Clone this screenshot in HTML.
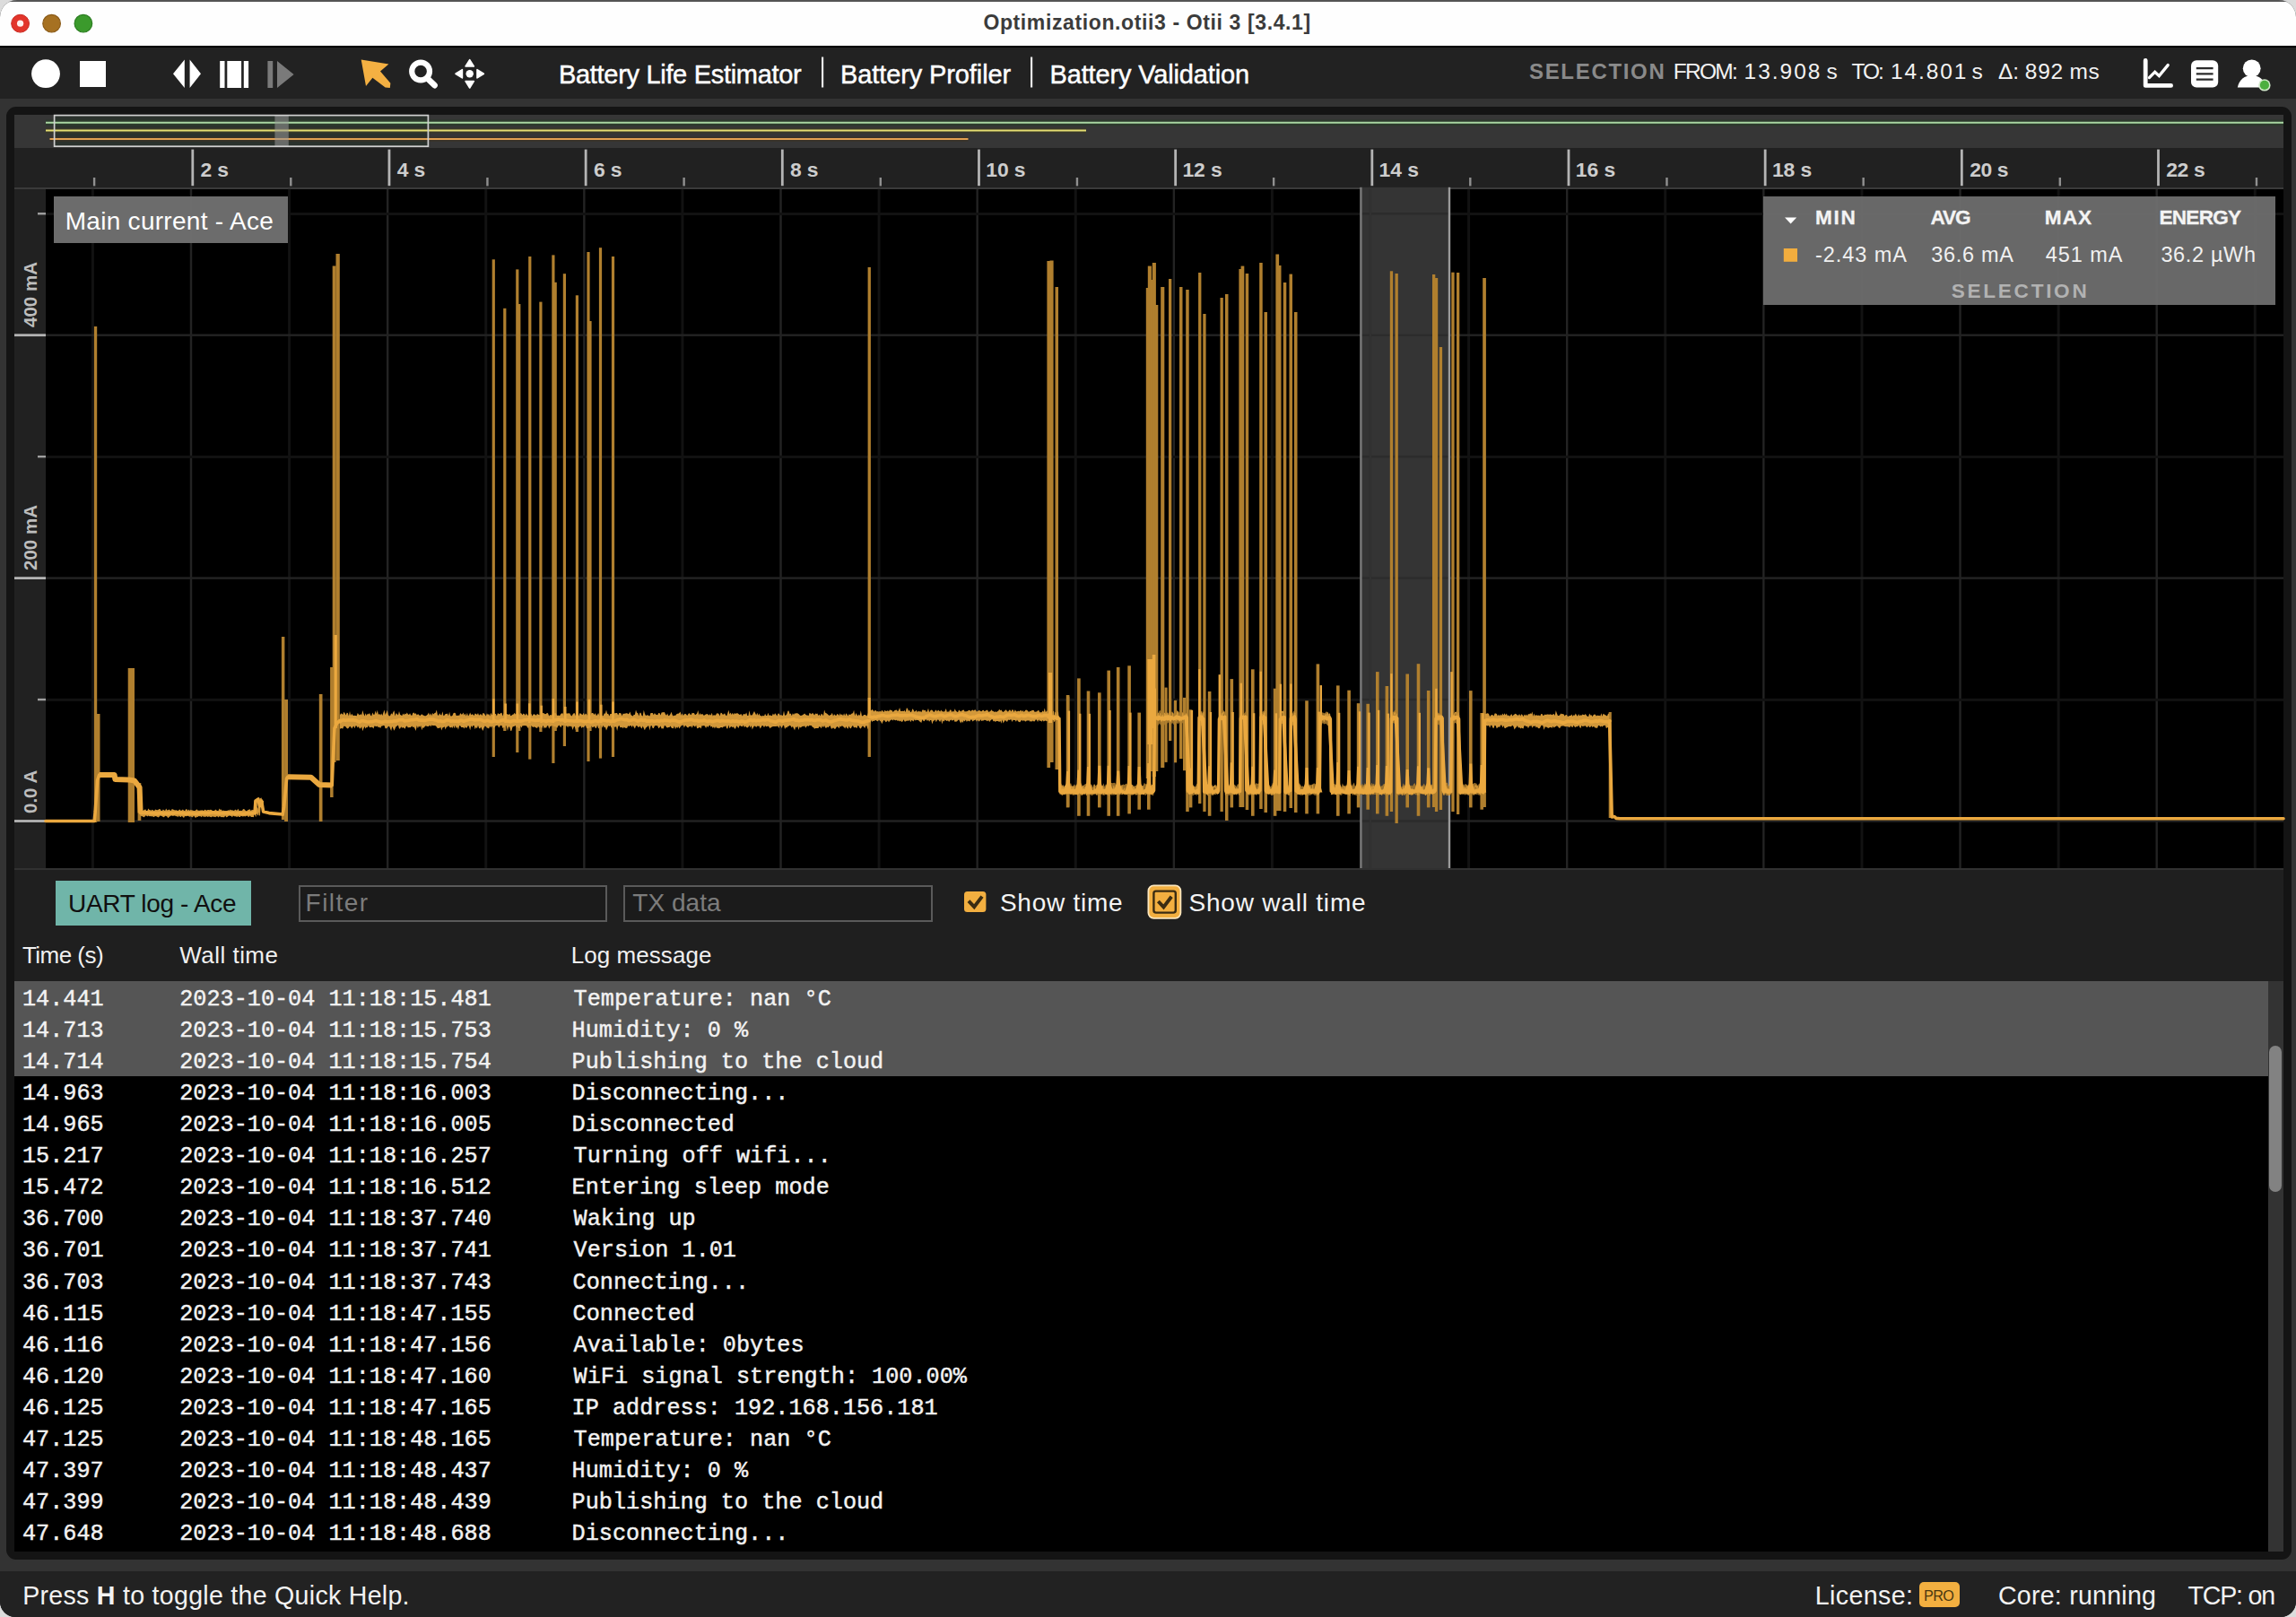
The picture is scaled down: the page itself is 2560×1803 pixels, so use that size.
<!DOCTYPE html>
<html lang="en"><head><meta charset="utf-8"><title>Optimization.otii3 - Otii 3 [3.4.1]</title>
<style>
html,body{margin:0;padding:0;}
body{width:2560px;height:1803px;background:#dcdcdc;position:relative;overflow:hidden;}
#win{position:absolute;left:0;top:0;width:2560px;height:1803px;border-radius:19px 19px 17px 17px;overflow:hidden;background:#222;}
.b{position:absolute;}
.t{position:absolute;white-space:pre;line-height:1;}
.s{font-family:"Liberation Sans",sans-serif;}
.m{font-family:"Liberation Mono",monospace;}
svg{position:absolute;left:0;top:0;overflow:visible;}
</style></head><body><div id="win">

<div class="b" style="left:0.00px;top:0.00px;width:2560.00px;height:52.00px;background:#fefefe;border-top:2px solid #555;box-sizing:border-box;"></div>
<div class="b" style="left:0.00px;top:51.00px;width:2560.00px;height:2.00px;background:#000;"></div>
<svg width="130" height="52" viewBox="0 0 130 52">
<circle cx="22.6" cy="26.2" r="9.9" fill="#e2352b" stroke="#c92a22" stroke-width="1"/><circle cx="22.6" cy="26.2" r="3.6" fill="#fff0ee"/>
<circle cx="57.6" cy="26.2" r="9.8" fill="#a67122" stroke="#8a5a17" stroke-width="1.2"/>
<circle cx="92.9" cy="26.2" r="9.8" fill="#3b9a2c" stroke="#2c7d22" stroke-width="1.2"/>
</svg>
<span class="t s" style="left:1096.40px;top:14.03px;font-size:23px;color:#3b3b3b;font-weight:bold;letter-spacing:0.618px;">Optimization.otii3 - Otii 3 [3.4.1]</span>
<div class="b" style="left:0.00px;top:53.00px;width:2560.00px;height:57.00px;background:#222;"></div>
<svg width="2560" height="130" viewBox="0 0 2560 130">
<circle cx="51" cy="82.2" r="15.9" fill="#fff"/>
<rect x="89" y="68" width="29" height="29" fill="#fff"/>
<path d="M193 82.2 L205.8 66.5 V98 Z M224 82.2 L211.6 66.5 V98 Z" fill="#fff"/>
<path d="M245.2 68h5.3v30h-5.3z M253.3 68h15.8v30h-15.8z M271.8 68h5.3v30h-5.3z" fill="#fff"/>
<path d="M298.4 68h5.8v30h-5.8z M309 68 L327.6 83 L309 98 Z" fill="#7a7a7a"/>
<path d="M402.7 66.5 L433.4 71.6 L424 79.6 L435.4 92.8 L434.8 98 L429.6 97.6 L415.4 86.8 L408 96 Z" fill="#f4b042"/>
<circle cx="469.1" cy="79.5" r="9.9" fill="none" stroke="#fff" stroke-width="6.2"/>
<path d="M476.5 87.3 L484.6 95.2" stroke="#fff" stroke-width="6.6" stroke-linecap="round"/>
<g fill="#fff"><path d="M523.7 66.6 L528.3 74 H519.1 Z M523.7 98 L528.3 90.6 H519.1 Z M508 82.3 L515.4 77.7 V86.9 Z M539.4 82.3 L532 77.7 V86.9 Z" stroke="#fff" stroke-width="1.6" stroke-linejoin="round"/>
<circle cx="523.7" cy="82.3" r="4.2"/></g>
<rect x="916" y="63.5" width="2.2" height="34" fill="#e8e8e8"/>
<rect x="1149" y="63.5" width="2.2" height="34" fill="#e8e8e8"/>
<!-- right icons -->
<path d="M2392.2 67.4 V95.4 H2420.6" fill="none" stroke="#fff" stroke-width="4.8" stroke-linecap="round" stroke-linejoin="round"/>
<path d="M2396.4 86.6 L2402.7 80.2 L2407.4 84.6 L2417.2 72.6" fill="none" stroke="#fff" stroke-width="3.3" stroke-linecap="round" stroke-linejoin="miter"/>
<rect x="2443" y="67.3" width="30.2" height="30.2" rx="6" fill="#fff"/>
<path d="M2448.8 76.1h18.8 M2448.8 82.4h18.8 M2448.8 88.6h18.8" stroke="#2a2a2a" stroke-width="2.3"/>
<circle cx="2510.7" cy="76.3" r="9.9" fill="#fff"/>
<path d="M2494.8 97.6 C2496.6 88.6 2502.6 84.2 2510.7 84.2 C2518.8 84.2 2524.8 88.6 2526.6 97.6 Z" fill="#fff"/>
<circle cx="2524.9" cy="94.9" r="6.7" fill="#cfe8c8"/><circle cx="2524.9" cy="94.9" r="5.1" fill="#4caf3f"/>
</svg>
<span class="t s" style="left:623.00px;top:69.05px;font-size:29px;color:#fff;letter-spacing:-0.312px;-webkit-text-stroke:0.45px #fff;">Battery Life Estimator</span>
<span class="t s" style="left:937.00px;top:69.05px;font-size:29px;color:#fff;letter-spacing:-0.109px;-webkit-text-stroke:0.45px #fff;">Battery Profiler</span>
<span class="t s" style="left:1170.50px;top:69.05px;font-size:29px;color:#fff;letter-spacing:-0.148px;-webkit-text-stroke:0.45px #fff;">Battery Validation</span>
<span class="t s" style="left:1705.00px;top:68.08px;font-size:24px;color:#8a8a8a;font-weight:bold;letter-spacing:1.674px;">SELECTION</span>
<span class="t s" style="left:1865.80px;top:67.76px;font-size:24.5px;color:#f2f2f2;letter-spacing:-1.731px;">FROM:</span>
<span class="t s" style="left:1944.60px;top:67.76px;font-size:24.5px;color:#f2f2f2;letter-spacing:1.978px;">13.908</span>
<span class="t s" style="left:2036.40px;top:67.76px;font-size:24.5px;color:#f2f2f2;">s</span>
<span class="t s" style="left:2064.40px;top:67.76px;font-size:24.5px;color:#f2f2f2;letter-spacing:-1.990px;">TO:</span>
<span class="t s" style="left:2108.00px;top:67.76px;font-size:24.5px;color:#f2f2f2;letter-spacing:1.878px;">14.801</span>
<span class="t s" style="left:2198.50px;top:67.76px;font-size:24.5px;color:#f2f2f2;">s</span>
<span class="t s" style="left:2228.00px;top:67.76px;font-size:24.5px;color:#f2f2f2;">Δ:</span>
<span class="t s" style="left:2257.80px;top:67.76px;font-size:24.5px;color:#f2f2f2;letter-spacing:0.724px;">892</span>
<span class="t s" style="left:2307.50px;top:67.76px;font-size:24.5px;color:#f2f2f2;letter-spacing:0.491px;">ms</span>
<div class="b" style="left:0.00px;top:110.00px;width:2560.00px;height:1642.30px;background:#333;"></div>
<div class="b" style="left:7.00px;top:119.00px;width:2547.50px;height:1620.00px;background:#141414;border-radius:11px;"></div>
<div class="b" style="left:16.00px;top:128.00px;width:2530.00px;height:37.00px;background:#363636;"></div>
<div class="b" style="left:16.00px;top:165.00px;width:2530.00px;height:46.00px;background:#212121;"></div>
<div class="b" style="left:16.00px;top:208.60px;width:2530.00px;height:2.20px;background:#3a3a3a;"></div>
<div class="b" style="left:16.00px;top:210.80px;width:35.00px;height:757.40px;background:#212121;"></div>
<div class="b" style="left:51.00px;top:210.80px;width:2495.00px;height:757.40px;background:#000;"></div>
<svg width="2560" height="1000" viewBox="0 0 2560 1000">
<rect x="60.6" y="128.6" width="416.8" height="34.6" fill="#2b322d"/>
<rect x="51" y="133.6" width="2495" height="6.6" fill="#2b3a2b" opacity="0.9"/>
<rect x="51" y="142.6" width="1160" height="6" fill="#3a3a28" opacity="0.8"/>
<rect x="55.5" y="152.4" width="1024" height="5.4" fill="#3b3226" opacity="0.8"/>
<path d="M51 136.8 H2546" stroke="#a9d7a2" stroke-width="2"/>
<path d="M51 145.6 H1211" stroke="#e6df72" stroke-width="2"/>
<path d="M55.5 155.1 H1079.5" stroke="#e3a052" stroke-width="2"/>
<rect x="306.4" y="129" width="15.4" height="34" fill="#999" opacity="0.55"/>
<rect x="60.6" y="128.6" width="416.8" height="34.6" fill="none" stroke="#d0d0d0" stroke-width="1.7"/>
<rect x="103.91" y="198" width="2.4" height="9.4" fill="#909090"/>
<rect x="213.40" y="166.6" width="2.8" height="40.6" fill="#b4b4b4"/>
<rect x="323.08" y="198" width="2.4" height="9.4" fill="#909090"/>
<rect x="432.57" y="166.6" width="2.8" height="40.6" fill="#b4b4b4"/>
<rect x="542.25" y="198" width="2.4" height="9.4" fill="#909090"/>
<rect x="651.74" y="166.6" width="2.8" height="40.6" fill="#b4b4b4"/>
<rect x="761.42" y="198" width="2.4" height="9.4" fill="#909090"/>
<rect x="870.91" y="166.6" width="2.8" height="40.6" fill="#b4b4b4"/>
<rect x="980.59" y="198" width="2.4" height="9.4" fill="#909090"/>
<rect x="1090.08" y="166.6" width="2.8" height="40.6" fill="#b4b4b4"/>
<rect x="1199.76" y="198" width="2.4" height="9.4" fill="#909090"/>
<rect x="1309.25" y="166.6" width="2.8" height="40.6" fill="#b4b4b4"/>
<rect x="1418.93" y="198" width="2.4" height="9.4" fill="#909090"/>
<rect x="1528.42" y="166.6" width="2.8" height="40.6" fill="#b4b4b4"/>
<rect x="1638.10" y="198" width="2.4" height="9.4" fill="#909090"/>
<rect x="1747.59" y="166.6" width="2.8" height="40.6" fill="#b4b4b4"/>
<rect x="1857.27" y="198" width="2.4" height="9.4" fill="#909090"/>
<rect x="1966.76" y="166.6" width="2.8" height="40.6" fill="#b4b4b4"/>
<rect x="2076.45" y="198" width="2.4" height="9.4" fill="#909090"/>
<rect x="2185.93" y="166.6" width="2.8" height="40.6" fill="#b4b4b4"/>
<rect x="2295.62" y="198" width="2.4" height="9.4" fill="#909090"/>
<rect x="2405.10" y="166.6" width="2.8" height="40.6" fill="#b4b4b4"/>
<rect x="2514.79" y="198" width="2.4" height="9.4" fill="#909090"/>
<rect x="101.91" y="210.8" width="3" height="757.4" fill="#121212"/>
<rect x="211.80" y="210.8" width="2.4" height="757.4" fill="#232323"/>
<rect x="321.08" y="210.8" width="3" height="757.4" fill="#121212"/>
<rect x="430.97" y="210.8" width="2.4" height="757.4" fill="#232323"/>
<rect x="540.25" y="210.8" width="3" height="757.4" fill="#121212"/>
<rect x="650.14" y="210.8" width="2.4" height="757.4" fill="#232323"/>
<rect x="759.42" y="210.8" width="3" height="757.4" fill="#121212"/>
<rect x="869.31" y="210.8" width="2.4" height="757.4" fill="#232323"/>
<rect x="978.59" y="210.8" width="3" height="757.4" fill="#121212"/>
<rect x="1088.48" y="210.8" width="2.4" height="757.4" fill="#232323"/>
<rect x="1197.76" y="210.8" width="3" height="757.4" fill="#121212"/>
<rect x="1307.65" y="210.8" width="2.4" height="757.4" fill="#232323"/>
<rect x="1416.93" y="210.8" width="3" height="757.4" fill="#121212"/>
<rect x="1526.82" y="210.8" width="2.4" height="757.4" fill="#232323"/>
<rect x="1636.10" y="210.8" width="3" height="757.4" fill="#121212"/>
<rect x="1745.99" y="210.8" width="2.4" height="757.4" fill="#232323"/>
<rect x="1855.27" y="210.8" width="3" height="757.4" fill="#121212"/>
<rect x="1965.16" y="210.8" width="2.4" height="757.4" fill="#232323"/>
<rect x="2074.45" y="210.8" width="3" height="757.4" fill="#121212"/>
<rect x="2184.33" y="210.8" width="2.4" height="757.4" fill="#232323"/>
<rect x="2293.62" y="210.8" width="3" height="757.4" fill="#121212"/>
<rect x="2403.50" y="210.8" width="2.4" height="757.4" fill="#232323"/>
<rect x="2512.79" y="210.8" width="3" height="757.4" fill="#121212"/>
<rect x="51" y="914.30" width="2495" height="2.4" fill="#232323"/>
<rect x="16" y="914.10" width="35" height="2.8" fill="#b4b4b4"/>
<rect x="51" y="778.85" width="2495" height="3" fill="#121212"/>
<rect x="42" y="778.85" width="9" height="2.4" fill="#a0a0a0"/>
<rect x="51" y="643.40" width="2495" height="2.4" fill="#232323"/>
<rect x="16" y="643.20" width="35" height="2.8" fill="#b4b4b4"/>
<rect x="51" y="507.95" width="2495" height="3" fill="#121212"/>
<rect x="42" y="507.95" width="9" height="2.4" fill="#a0a0a0"/>
<rect x="51" y="372.50" width="2495" height="2.4" fill="#232323"/>
<rect x="16" y="372.30" width="35" height="2.8" fill="#b4b4b4"/>
<rect x="51" y="237.05" width="2495" height="3" fill="#121212"/>
<rect x="42" y="237.05" width="9" height="2.4" fill="#a0a0a0"/>
<rect x="1517.4" y="208.8" width="98.8" height="759.4" fill="#343434"/>
<rect x="1518" y="914.30" width="97" height="2.4" fill="#2c2c2c"/>
<rect x="1518" y="778.85" width="97" height="2.4" fill="#2c2c2c"/>
<rect x="1518" y="643.40" width="97" height="2.4" fill="#2c2c2c"/>
<rect x="1518" y="507.95" width="97" height="2.4" fill="#2c2c2c"/>
<rect x="1518" y="372.50" width="97" height="2.4" fill="#2c2c2c"/>
<rect x="1518" y="237.05" width="97" height="2.4" fill="#2c2c2c"/>
<rect x="1526.82" y="210.8" width="2.4" height="757.4" fill="#313131"/>
<rect x="1516.2" y="208.8" width="2.4" height="759.4" fill="#7a7a7a"/>
<rect x="1614.8" y="208.8" width="2.4" height="759.4" fill="#9a9a9a"/>
<g fill="#b07f2e">
<rect x="104.9" y="364" width="3.3" height="553"/>
<rect x="107.2" y="796" width="4.3" height="120"/>
<rect x="142.7" y="745" width="7.3" height="172"/>
<rect x="153.6" y="873" width="3.7" height="42"/>
<rect x="313.9" y="710" width="3.5" height="204"/>
<rect x="317.1" y="780" width="3.9" height="136"/>
<rect x="355.8" y="774" width="3.7" height="142"/>
<rect x="368.1" y="744" width="3.5" height="145"/>
<rect x="370.7" y="296.5" width="3.9" height="553.5"/>
<rect x="374.5" y="283" width="4.3" height="565"/>
<rect x="548.7" y="289.3" width="3.2" height="554.7"/>
<rect x="561.2" y="343.8" width="3.2" height="471.2"/>
<rect x="575.2" y="300.4" width="3.2" height="538.6"/>
<rect x="577.2" y="339" width="3.2" height="476"/>
<rect x="589.2" y="286" width="3.2" height="560.6"/>
<rect x="601.3" y="336.6" width="3.2" height="479.4"/>
<rect x="615.3" y="284.4" width="3.2" height="566.6"/>
<rect x="617.6" y="314.8" width="3.2" height="500.2"/>
<rect x="627.8" y="305.2" width="3.2" height="526.8"/>
<rect x="641.8" y="329.3" width="3.2" height="486.7"/>
<rect x="654.4" y="281" width="3.2" height="568"/>
<rect x="656.4" y="358" width="3.2" height="457"/>
<rect x="667.9" y="276.2" width="3.2" height="569.4"/>
<rect x="681.9" y="286" width="3.2" height="558"/>
<rect x="967.6" y="298" width="3.3" height="546"/>
<rect x="1167.4" y="291" width="3.7" height="565"/>
<rect x="1170.5" y="290.5" width="4.1" height="559.5"/>
<rect x="1176.5" y="320" width="3.5" height="538"/>
<rect x="1189.1" y="776.6" width="3.3" height="123"/>
<rect x="1188.8" y="775" width="3.6" height="125.4"/>
<rect x="1201.1" y="756.4" width="3.6" height="153.4"/>
<rect x="1211.7" y="770.5" width="3.6" height="139.3"/>
<rect x="1224" y="772.3" width="3.6" height="128.1"/>
<rect x="1234.4" y="747.6" width="3.6" height="162.2"/>
<rect x="1244.9" y="744" width="3.6" height="165.8"/>
<rect x="1257.3" y="742.3" width="3.6" height="165.1"/>
<rect x="1268.4" y="794.6" width="3.6" height="108.1"/>
<rect x="1279" y="754.2" width="3.6" height="148.5"/>
<rect x="1325.8" y="791.3" width="3.6" height="109.1"/>
<rect x="1346.8" y="771" width="3.6" height="138.8"/>
<rect x="1371.5" y="757.1" width="3.6" height="143.3"/>
<rect x="1395" y="746.3" width="3.6" height="163.5"/>
<rect x="1419.8" y="767.7" width="3.6" height="142.1"/>
<rect x="1455.2" y="781.3" width="3.6" height="126.1"/>
<rect x="1467.6" y="740.4" width="3.6" height="167"/>
<rect x="1490" y="764.4" width="3.6" height="145.4"/>
<rect x="1502.3" y="769.7" width="3.6" height="137.7"/>
<rect x="1512.8" y="784.2" width="3.6" height="116.2"/>
<rect x="1523.4" y="784.8" width="3.6" height="117.9"/>
<rect x="1534" y="749.1" width="3.6" height="158.3"/>
<rect x="1544.6" y="765" width="3.6" height="144.8"/>
<rect x="1567.4" y="751.5" width="3.6" height="148.9"/>
<rect x="1579.7" y="740.2" width="3.6" height="169.6"/>
<rect x="1590.9" y="770" width="3.6" height="130.4"/>
<rect x="1638" y="770.1" width="3.6" height="130.3"/>
<rect x="1650.4" y="795" width="3.6" height="107.7"/>
<rect x="1277.8" y="321" width="3.7" height="547"/>
<rect x="1279.8" y="296.6" width="4.1" height="563.4"/>
<rect x="1282.4" y="312" width="4.1" height="548"/>
<rect x="1284.8" y="293" width="4.1" height="573"/>
<rect x="1287.6" y="340" width="3.7" height="520"/>
<rect x="1294.2" y="320" width="4.1" height="536"/>
<rect x="1303" y="311" width="3.3" height="515"/>
<rect x="1315" y="320" width="3.5" height="526"/>
<rect x="1322.2" y="323" width="3.5" height="582"/>
<rect x="1336.1" y="304" width="3.3" height="592"/>
<rect x="1341.3" y="350" width="3.3" height="555"/>
<rect x="1360.5" y="332" width="3.3" height="573"/>
<rect x="1366" y="328" width="3.5" height="587"/>
<rect x="1381.4" y="300" width="3.7" height="600"/>
<rect x="1383.6" y="296.6" width="3.7" height="603.4"/>
<rect x="1388.7" y="305" width="3.5" height="598"/>
<rect x="1404.2" y="293" width="3.5" height="609"/>
<rect x="1409.5" y="348" width="3.5" height="558"/>
<rect x="1422.4" y="283.5" width="3.7" height="620.5"/>
<rect x="1424.8" y="296" width="3.7" height="608"/>
<rect x="1430.8" y="315" width="3.5" height="590"/>
<rect x="1437.5" y="305.6" width="3.5" height="595.4"/>
<rect x="1443" y="348" width="3.5" height="558"/>
<rect x="1549.8" y="302.3" width="3.3" height="602.7"/>
<rect x="1555.5" y="305" width="3.3" height="613"/>
<rect x="1597" y="306" width="3.3" height="594"/>
<rect x="1599.9" y="310" width="3.3" height="595"/>
<rect x="1604.8" y="387" width="3.3" height="516"/>
<rect x="1618.3" y="303.7" width="3.3" height="601.3"/>
<rect x="1624" y="304" width="3.3" height="604"/>
<rect x="1653.2" y="310" width="3.7" height="590"/>
<rect x="1298.5" y="766.6" width="3.1" height="83.3"/>
<rect x="1309" y="780.9" width="3.1" height="69.4"/>
<rect x="1319" y="777.9" width="3.1" height="81.3"/>
<rect x="1793.7" y="794" width="3.1" height="118"/>
</g>
<path d="M1181 875.7 L1182.3 877.9 L1183.6 873.4 L1184.9 877.2 L1186.2 877.8 L1187.5 876.3 L1188.8 874 L1190.1 875.3 L1191.4 874.4 L1192.7 874.5 L1194 873.1 L1195.3 876.9 L1196.6 877 L1197.9 874.3 L1199.2 876.3 L1200.5 874.4 L1201.8 875.9 L1203.1 875.7 L1204.4 877.7 L1205.7 872.7 L1207 877.6 L1208.3 875.4 L1209.6 874.4 L1210.9 873.7 L1212.2 873 L1213.5 875.5 L1214.8 875.4 L1216.1 874.3 L1217.4 874.9 L1218.7 877.9 L1220 873.7 L1221.3 876.3 L1222.6 874.9 L1223.9 876.2 L1225.2 876.1 L1226.5 876.6 L1227.8 875.7 L1229.1 877.6 L1230.4 873.3 L1231.7 877.2 L1233 874.2 L1234.3 876 L1235.6 878.1 L1236.9 876.2 L1238.2 872.6 L1239.5 873.1 L1240.8 873.3 L1242.1 872.8 L1243.4 872.9 L1244.7 877 L1246 875.4 L1247.3 876 L1248.6 874.9 L1249.9 876.6 L1251.2 875.3 L1252.5 874.4 L1253.8 875.2 L1255.1 873.9 L1256.4 873.8 L1257.7 876.7 L1259 875.3 L1260.3 876.5 L1261.6 874.2 L1262.9 875.4 L1264.2 876.9 L1265.5 876.1 L1266.8 876.1 L1268.1 874.1 L1269.4 876.8 L1270.7 874.5 L1272 874.6 L1273.3 876.6 L1274.6 876.1 L1275.9 872.8 L1277.2 874.4 L1278.5 873.7 L1279.8 876.2 L1281.1 873.7 L1282.4 875.4 L1283.7 876.6 L1285 874.2 L1286.3 873.4 L1287.6 794 L1288.9 794.6 L1290.2 795.2 L1291.5 794.7 L1292.8 792.2 L1294.1 792.2 L1295.4 794.1 L1296.7 792.5 L1298 795.5 L1299.3 794 L1300.6 793.3 L1301.9 795.9 L1303.2 794.3 L1304.5 794.3 L1305.8 794.5 L1307.1 793.2 L1308.4 795.9 L1309.7 793.3 L1311 795.1 L1312.3 791.9 L1313.6 793.4 L1314.9 794.6 L1316.2 794.5 L1317.5 793.3 L1318.8 795.4 L1320.1 794.6 L1321.4 794.4 L1322.7 795.5 L1324 794.9 L1325.3 876.8 L1326.6 876 L1327.9 873.7 L1329.2 876.6 L1330.5 875.5 L1331.8 877.8 L1333.1 876.8 L1334.4 873.8 L1335.7 875.1 L1337 792.4 L1338.3 794.8 L1339.6 794 L1340.9 795.6 L1342.2 876.9 L1343.5 877.6 L1344.8 876.1 L1346.1 875.3 L1347.4 874.2 L1348.7 872.7 L1350 875.3 L1351.3 876.1 L1352.6 876.9 L1353.9 876.1 L1355.2 874.7 L1356.5 876.5 L1357.8 872.8 L1359.1 795.5 L1360.4 793.6 L1361.7 794.5 L1363 794.5 L1364.3 791.7 L1365.6 794.2 L1366.9 874.5 L1368.2 875.6 L1369.5 876.8 L1370.8 875.6 L1372.1 876 L1373.4 877.9 L1374.7 872.8 L1376 874.4 L1377.3 875.5 L1378.6 877.1 L1379.9 874.3 L1381.2 874.6 L1382.5 874.7 L1383.8 793.7 L1385.1 793.5 L1386.4 793.8 L1387.7 795.4 L1389 792.9 L1390.3 874.7 L1391.6 875 L1392.9 875.7 L1394.2 875 L1395.5 876.1 L1396.8 872.8 L1398.1 874.5 L1399.4 874.7 L1400.7 873 L1402 874.1 L1403.3 873.4 L1404.6 873.5 L1405.9 795.9 L1407.2 794 L1408.5 792.9 L1409.8 792.1 L1411.1 873.2 L1412.4 878 L1413.7 877.7 L1415 874.7 L1416.3 877.2 L1417.6 876.6 L1418.9 873.1 L1420.2 872.7 L1421.5 873.7 L1422.8 873 L1424.1 874.1 L1425.4 877.6 L1426.7 875.1 L1428 792.1 L1429.3 792.9 L1430.6 792.5 L1431.9 795.1 L1433.2 876.6 L1434.5 873.5 L1435.8 874.3 L1437.1 876.9 L1438.4 872.9 L1439.7 793.7 L1441 795.9 L1442.3 792.6 L1443.6 794.4 L1444.9 876.2 L1446.2 874.5 L1447.5 875.2 L1448.8 873 L1450.1 875.3 L1451.4 877 L1452.7 876.2 L1454 877.6 L1455.3 874.6 L1456.6 876 L1457.9 876.9 L1459.2 878.1 L1460.5 876.7 L1461.8 875.1 L1463.1 874.7 L1464.4 873.8 L1465.7 873.4 L1467 874.4 L1468.3 875.7 L1469.6 872.9 L1470.9 877.5 L1472.2 793.7 L1473.5 795 L1474.8 794.3 L1476.1 795.2 L1477.4 795.1 L1478.7 793.6 L1480 793.7 L1481.3 795.9 L1482.6 795.1 L1483.9 873.9 L1485.2 875.1 L1486.5 873.8 L1487.8 874.1 L1489.1 874.9 L1490.4 876.1 L1491.7 877.7 L1493 874.3 L1494.3 875.1 L1495.6 877.5 L1496.9 873.3 L1498.2 876.7 L1499.5 876.7 L1500.8 875.4 L1502.1 876.4 L1503.4 876.1 L1504.7 874.1 L1506 876.9 L1507.3 876.3 L1508.6 874.3 L1509.9 872.6 L1511.2 877.9 L1512.5 875.8 L1513.8 875.9 L1515.1 877.7 L1516.4 875.3 L1517.7 875.7 L1519 873.5 L1520.3 877.1 L1521.6 873.2 L1522.9 874.5 L1524.2 875.6 L1525.5 876.8 L1526.8 873.3 L1528.1 876.1 L1529.4 872.7 L1530.7 874.7 L1532 873.5 L1533.3 877.4 L1534.6 874.2 L1535.9 877 L1537.2 874.5 L1538.5 878 L1539.8 876.3 L1541.1 876.2 L1542.4 874.4 L1543.7 873.8 L1545 875.1 L1546.3 877.5 L1547.6 877.7 L1548.9 878 L1550.2 876.1 L1551.5 794.2 L1552.8 794.1 L1554.1 793.6 L1555.4 791.6 L1556.7 794 L1558 872.8 L1559.3 874.5 L1560.6 875.9 L1561.9 876.6 L1563.2 877.9 L1564.5 873.3 L1565.8 875.7 L1567.1 876.6 L1568.4 875.2 L1569.7 872.9 L1571 876.8 L1572.3 875.8 L1573.6 875.7 L1574.9 876.4 L1576.2 874.2 L1577.5 873 L1578.8 876.4 L1580.1 878 L1581.4 877.4 L1582.7 878 L1584 876.9 L1585.3 877.6 L1586.6 875.3 L1587.9 873.6 L1589.2 876.7 L1590.5 873.5 L1591.8 874 L1593.1 872.9 L1594.4 874.8 L1595.7 877.5 L1597 874.3 L1598.3 874.1 L1599.6 875.4 L1600.9 794 L1602.2 793.4 L1603.5 794.8 L1604.8 795.6 L1606.1 793.8 L1607.4 795.5 L1608.7 875.3 L1610 876 L1611.3 873.2 L1612.6 872.7 L1613.9 872.7 L1615.2 876.7 L1616.5 874.7 L1617.8 872.6 L1619.1 792.4 L1620.4 795.6 L1621.7 795.2 L1623 793.2 L1624.3 793.9 L1625.6 795.6 L1626.9 795.5 L1628.2 874.5 L1629.5 877.9 L1630.8 872.8 L1632.1 875.8 L1633.4 874.3 L1634.7 874.5 L1636 875 L1637.3 877.1 L1638.6 872.8 L1639.9 872.6 L1641.2 873.5 L1642.5 874 L1643.8 872.9 L1645.1 873.3 L1646.4 873.8 L1647.7 876.4 L1649 873.7 L1650.3 873.5 L1651.6 877.2 L1652.9 875 L1654.2 876.2 L1654.2 885.3 L1652.9 885.5 L1651.6 885.4 L1650.3 886.4 L1649 886.8 L1647.7 885.8 L1646.4 886.1 L1645.1 885.6 L1643.8 886.8 L1642.5 886.5 L1641.2 885.6 L1639.9 886 L1638.6 886.7 L1637.3 887 L1636 886.1 L1634.7 885.9 L1633.4 886.6 L1632.1 885.8 L1630.8 885.9 L1629.5 885.5 L1628.2 886.5 L1626.9 807.1 L1625.6 808 L1624.3 808.2 L1623 805.9 L1621.7 806.2 L1620.4 808.9 L1619.1 807.5 L1617.8 886.4 L1616.5 885.5 L1615.2 886.7 L1613.9 887 L1612.6 886.9 L1611.3 885.6 L1610 885.9 L1608.7 886.5 L1607.4 807.3 L1606.1 806 L1604.8 808.6 L1603.5 807.9 L1602.2 806.3 L1600.9 806.3 L1599.6 885.5 L1598.3 885.7 L1597 886.3 L1595.7 885.2 L1594.4 886.8 L1593.1 885.9 L1591.8 885.3 L1590.5 885.2 L1589.2 885.6 L1587.9 885.9 L1586.6 885.4 L1585.3 885.5 L1584 885.3 L1582.7 885.4 L1581.4 886 L1580.1 885.9 L1578.8 886.5 L1577.5 885.3 L1576.2 885.2 L1574.9 886.3 L1573.6 886.9 L1572.3 885.2 L1571 886.2 L1569.7 886.9 L1568.4 886 L1567.1 885.4 L1565.8 886.6 L1564.5 885.5 L1563.2 886 L1561.9 885.3 L1560.6 886.6 L1559.3 886.8 L1558 885.7 L1556.7 806 L1555.4 806.7 L1554.1 806.4 L1552.8 805.6 L1551.5 807.3 L1550.2 885.5 L1548.9 886.5 L1547.6 887 L1546.3 886.6 L1545 886.7 L1543.7 885.7 L1542.4 885.7 L1541.1 885.4 L1539.8 886.3 L1538.5 886 L1537.2 886.4 L1535.9 886.4 L1534.6 886.6 L1533.3 885.7 L1532 886 L1530.7 886.4 L1529.4 885.1 L1528.1 886.9 L1526.8 885.3 L1525.5 886.2 L1524.2 886.2 L1522.9 886.2 L1521.6 885.9 L1520.3 885.9 L1519 886.1 L1517.7 886.6 L1516.4 886 L1515.1 887 L1513.8 885.7 L1512.5 887 L1511.2 886.6 L1509.9 885.5 L1508.6 886.7 L1507.3 885.3 L1506 885.1 L1504.7 885.3 L1503.4 886.7 L1502.1 886 L1500.8 885.6 L1499.5 885.3 L1498.2 885.3 L1496.9 885.2 L1495.6 886.8 L1494.3 886.6 L1493 885.4 L1491.7 886.4 L1490.4 886.1 L1489.1 886.4 L1487.8 885.6 L1486.5 885.7 L1485.2 885.5 L1483.9 886.2 L1482.6 805.2 L1481.3 809.2 L1480 808.8 L1478.7 807 L1477.4 807.1 L1476.1 807.6 L1474.8 805.7 L1473.5 808.9 L1472.2 805.7 L1470.9 885.9 L1469.6 885.5 L1468.3 886.4 L1467 886.7 L1465.7 886.7 L1464.4 885.7 L1463.1 885.4 L1461.8 886.3 L1460.5 886.8 L1459.2 886.7 L1457.9 886 L1456.6 886.3 L1455.3 886.1 L1454 885.7 L1452.7 886.7 L1451.4 886.5 L1450.1 886.7 L1448.8 886 L1447.5 885.4 L1446.2 885.9 L1444.9 886.6 L1443.6 805.9 L1442.3 808.9 L1441 808.4 L1439.7 807.3 L1438.4 885.8 L1437.1 885.5 L1435.8 885.9 L1434.5 885.6 L1433.2 886.6 L1431.9 809.3 L1430.6 807.1 L1429.3 807.1 L1428 805.6 L1426.7 886.3 L1425.4 887 L1424.1 885.6 L1422.8 886.7 L1421.5 885.7 L1420.2 886 L1418.9 886.8 L1417.6 886.9 L1416.3 885.7 L1415 885.3 L1413.7 885.2 L1412.4 885.8 L1411.1 885.8 L1409.8 805.9 L1408.5 807.4 L1407.2 808.7 L1405.9 809 L1404.6 886.1 L1403.3 885.5 L1402 885.6 L1400.7 887 L1399.4 885.2 L1398.1 885.3 L1396.8 886.7 L1395.5 886 L1394.2 886.6 L1392.9 886.8 L1391.6 885.5 L1390.3 886.7 L1389 807.5 L1387.7 806.4 L1386.4 807.8 L1385.1 805.6 L1383.8 806.4 L1382.5 885.4 L1381.2 885.4 L1379.9 885.6 L1378.6 886.4 L1377.3 885.5 L1376 886.1 L1374.7 886.5 L1373.4 885.5 L1372.1 886.6 L1370.8 886.8 L1369.5 886.7 L1368.2 885.9 L1366.9 886.4 L1365.6 805.7 L1364.3 806.6 L1363 806.9 L1361.7 808.8 L1360.4 806.5 L1359.1 808 L1357.8 885.8 L1356.5 885.3 L1355.2 886.2 L1353.9 885.8 L1352.6 886.9 L1351.3 886.8 L1350 886.1 L1348.7 885.4 L1347.4 886.1 L1346.1 885.7 L1344.8 886 L1343.5 885.3 L1342.2 885.1 L1340.9 807.1 L1339.6 809.5 L1338.3 808.4 L1337 805.5 L1335.7 885.9 L1334.4 886.8 L1333.1 886.3 L1331.8 885.9 L1330.5 887.1 L1329.2 886.7 L1327.9 886.7 L1326.6 885.2 L1325.3 886.3 L1324 808.9 L1322.7 809.4 L1321.4 809.1 L1320.1 806.9 L1318.8 806 L1317.5 807.3 L1316.2 807.9 L1314.9 805.2 L1313.6 807.6 L1312.3 806.1 L1311 808.8 L1309.7 806.3 L1308.4 808 L1307.1 805.8 L1305.8 808.1 L1304.5 808.4 L1303.2 805 L1301.9 806.8 L1300.6 806.1 L1299.3 806.8 L1298 809.1 L1296.7 806.7 L1295.4 805.9 L1294.1 809 L1292.8 806.5 L1291.5 809.1 L1290.2 805.7 L1288.9 809.4 L1287.6 806.9 L1286.3 886.8 L1285 886.9 L1283.7 886.1 L1282.4 885.8 L1281.1 886.6 L1279.8 885.3 L1278.5 885.6 L1277.2 887 L1275.9 886.1 L1274.6 885.2 L1273.3 885.2 L1272 886.5 L1270.7 886.5 L1269.4 886.7 L1268.1 885.5 L1266.8 886.6 L1265.5 885.7 L1264.2 886 L1262.9 886.6 L1261.6 886.7 L1260.3 885.9 L1259 885.9 L1257.7 887 L1256.4 886.1 L1255.1 886.5 L1253.8 885.7 L1252.5 885.5 L1251.2 885.9 L1249.9 886.1 L1248.6 885.5 L1247.3 886.1 L1246 885.8 L1244.7 886.1 L1243.4 886.2 L1242.1 886.4 L1240.8 886.3 L1239.5 886.7 L1238.2 885.7 L1236.9 886.8 L1235.6 885.2 L1234.3 886.4 L1233 885.3 L1231.7 886.8 L1230.4 886.4 L1229.1 886.6 L1227.8 885.1 L1226.5 887.1 L1225.2 886.5 L1223.9 886.5 L1222.6 886.5 L1221.3 885.2 L1220 885.3 L1218.7 886.5 L1217.4 887.1 L1216.1 886.5 L1214.8 885.4 L1213.5 885.4 L1212.2 886.7 L1210.9 885.7 L1209.6 886.1 L1208.3 885.5 L1207 886.1 L1205.7 886.9 L1204.4 886.2 L1203.1 885.4 L1201.8 886.5 L1200.5 885.5 L1199.2 885.6 L1197.9 887.1 L1196.6 885.3 L1195.3 885.9 L1194 885.1 L1192.7 885.3 L1191.4 886 L1190.1 885.4 L1188.8 886.5 L1187.5 885.3 L1186.2 886.1 L1184.9 886.4 L1183.6 886.4 L1182.3 885.3 L1181 885.4Z" fill="#b07f2e" opacity="0.85"/>
<g fill="#d2983a">
<path d="M156.6 903.6 L157.7 901.6 L158.8 904.2 L159.9 903.4 L161 903 L162.1 902.2 L163.2 904 L164.3 903.9 L165.4 901.5 L166.5 902.9 L167.6 903.3 L168.7 903.8 L169.8 902.8 L170.9 903.4 L172 904.2 L173.1 902.5 L174.2 903.1 L175.3 903.3 L176.4 902.9 L177.5 901.9 L178.6 902.3 L179.7 904 L180.8 904.1 L181.9 902.6 L183 903.5 L184.1 903.9 L185.2 901.4 L186.3 903.5 L187.4 903.2 L188.5 902.4 L189.6 903.5 L190.7 904.1 L191.8 902 L192.9 902.4 L194 903 L195.1 903.5 L196.2 903.3 L197.3 903.6 L198.4 904.2 L199.5 903.1 L200.6 902.5 L201.7 903.9 L202.8 903.6 L203.9 902.5 L205 903.8 L206.1 904.2 L207.2 902.3 L208.3 902.3 L209.4 903.9 L210.5 902.5 L211.6 904.1 L212.7 902.7 L213.8 903.6 L214.9 903.4 L216 904 L217.1 904 L218.2 903.5 L219.3 902.3 L220.4 903.4 L221.5 903.7 L222.6 903.7 L223.7 903.5 L224.8 903.4 L225.9 903.2 L227 904.3 L228.1 902.8 L229.2 903.1 L230.3 903.8 L231.4 903.1 L232.5 903 L233.6 903.3 L234.7 902.8 L235.8 903.1 L236.9 904 L238 904.1 L239.1 904 L240.2 902.4 L241.3 903.4 L242.4 903.9 L243.5 903.9 L244.6 901.5 L245.7 903 L246.8 902.6 L247.9 904.2 L249 903.4 L250.1 904 L251.2 904.1 L252.3 904.1 L253.4 904.1 L254.5 903.3 L255.6 903.7 L256.7 902.4 L257.8 903.6 L258.9 903.2 L260 903.8 L261.1 903.9 L262.2 902.6 L263.3 903.5 L264.4 903.6 L265.5 901.8 L266.6 904.1 L267.7 904.1 L268.8 903.7 L269.9 903.9 L271 902.3 L272.1 902 L273.2 903.3 L274.3 904.3 L275.4 904.2 L276.5 903.1 L277.6 902.8 L278.7 902.2 L279.8 904.2 L280.9 902.8 L282 903.2 L283.1 903.1 L283.1 911.2 L282 911.1 L280.9 911 L279.8 911.1 L278.7 909.6 L277.6 911.1 L276.5 910.4 L275.4 909.4 L274.3 909.9 L273.2 910.4 L272.1 910.1 L271 910.5 L269.9 910.3 L268.8 909.8 L267.7 911.1 L266.6 910.9 L265.5 910 L264.4 911.1 L263.3 910.4 L262.2 910.2 L261.1 910.3 L260 909.4 L258.9 911.3 L257.8 910 L256.7 909.7 L255.6 909.6 L254.5 910 L253.4 911.1 L252.3 911.3 L251.2 909.4 L250.1 911.2 L249 911.2 L247.9 910.9 L246.8 911.3 L245.7 910.4 L244.6 910.2 L243.5 911.6 L242.4 910.2 L241.3 910.3 L240.2 911.3 L239.1 910.8 L238 910.7 L236.9 910.2 L235.8 911.3 L234.7 911.1 L233.6 910.4 L232.5 910.4 L231.4 910.9 L230.3 909.9 L229.2 911 L228.1 910.5 L227 911 L225.9 909.4 L224.8 911.2 L223.7 910.3 L222.6 910.2 L221.5 909.9 L220.4 911.1 L219.3 910.7 L218.2 912.1 L217.1 911 L216 909.6 L214.9 911.3 L213.8 911 L212.7 910.3 L211.6 910.7 L210.5 910.3 L209.4 909.8 L208.3 910.1 L207.2 910.3 L206.1 909.9 L205 912 L203.9 911 L202.8 909.8 L201.7 910.9 L200.6 910.8 L199.5 909.4 L198.4 911.3 L197.3 909.9 L196.2 910.3 L195.1 909.6 L194 909.6 L192.9 910.1 L191.8 909.4 L190.7 909.5 L189.6 910.2 L188.5 910.9 L187.4 912.2 L186.3 910.5 L185.2 909.9 L184.1 909.8 L183 911.2 L181.9 911.1 L180.8 910.3 L179.7 909.8 L178.6 909.6 L177.5 910.7 L176.4 911.4 L175.3 910.7 L174.2 910.3 L173.1 910 L172 910.7 L170.9 910.9 L169.8 909.9 L168.7 910.5 L167.6 910 L166.5 910.2 L165.4 909.5 L164.3 910.5 L163.2 909.6 L162.1 909.4 L161 911.3 L159.9 911 L158.8 910.2 L157.7 910.1 L156.6 909.6Z"/>
<path d="M379 797.3 L380.1 795.6 L381.2 795.8 L382.3 797.1 L383.4 793.8 L384.5 795.3 L385.6 797.6 L386.7 794.8 L387.8 795 L388.9 798.4 L390 792.9 L391.1 798.1 L392.2 795.7 L393.3 797.4 L394.4 798 L395.5 797.8 L396.6 798.1 L397.7 798.3 L398.8 795.1 L399.9 796.5 L401 797.5 L402.1 796.1 L403.2 797.6 L404.3 792.1 L405.4 795.8 L406.5 798.6 L407.6 795.2 L408.7 798 L409.8 795.7 L410.9 796.4 L412 794.9 L413.1 797.6 L414.2 798.4 L415.3 794.6 L416.4 796.8 L417.5 796.7 L418.6 792.6 L419.7 795.9 L420.8 791.8 L421.9 796.9 L423 795.7 L424.1 797.4 L425.2 795.6 L426.3 797.9 L427.4 794.8 L428.5 791.6 L429.6 797.1 L430.7 794.6 L431.8 791.7 L432.9 797.1 L434 798.6 L435.1 798.1 L436.2 795.3 L437.3 796.7 L438.4 794 L439.5 792.2 L440.6 798.4 L441.7 795 L442.8 796.2 L443.9 797.5 L445 792.9 L446.1 796.7 L447.2 797.6 L448.3 797.9 L449.4 795.5 L450.5 797.2 L451.6 795.6 L452.7 796.4 L453.8 794.6 L454.9 796.6 L456 797 L457.1 795.2 L458.2 797.5 L459.3 797.8 L460.4 795.1 L461.5 794.6 L462.6 796 L463.7 795.3 L464.8 797.5 L465.9 796.3 L467 796.8 L468.1 798.2 L469.2 797.2 L470.3 796.2 L471.4 797.3 L472.5 797.8 L473.6 798.2 L474.7 798.3 L475.8 797.5 L476.9 796.4 L478 794.6 L479.1 797.8 L480.2 795.3 L481.3 798 L482.4 795 L483.5 796.6 L484.6 794.9 L485.7 794.7 L486.8 791.5 L487.9 797.1 L489 798 L490.1 795.2 L491.2 797 L492.3 797.6 L493.4 793.2 L494.5 798.2 L495.6 797.4 L496.7 796 L497.8 796.1 L498.9 795.5 L500 798.2 L501.1 793.7 L502.2 798.3 L503.3 798.4 L504.4 798.1 L505.5 795.3 L506.6 794.8 L507.7 794.9 L508.8 798 L509.9 798.1 L511 797.6 L512.1 797.9 L513.2 795 L514.3 796.5 L515.4 796.4 L516.5 794.6 L517.6 797.6 L518.7 795.6 L519.8 798.5 L520.9 794.7 L522 798.6 L523.1 796.9 L524.2 794.6 L525.3 797.2 L526.4 796.3 L527.5 796.7 L528.6 798 L529.7 795.5 L530.8 796 L531.9 796.9 L533 795 L534.1 797.7 L535.2 796.4 L536.3 796.2 L537.4 797.9 L538.5 795 L539.6 795.2 L540.7 796.8 L541.8 798.5 L542.9 795.2 L544 796.9 L545.1 796 L546.2 798.6 L547.3 794.8 L548.4 797.3 L549.5 795.8 L550.6 795.2 L551.7 795.7 L552.8 796.1 L553.9 798.5 L555 794.9 L556.1 796.1 L557.2 796.3 L558.3 795 L559.4 794.8 L560.5 798.5 L561.6 795.3 L562.7 798.3 L563.8 796.9 L564.9 795.8 L566 796.6 L567.1 797 L568.2 795.8 L569.3 798.3 L570.4 797.8 L571.5 796.7 L572.6 796.6 L573.7 794.8 L574.8 796.6 L575.9 795.5 L577 797.2 L578.1 795.2 L579.2 797.6 L580.3 795.1 L581.4 795.6 L582.5 797.3 L583.6 795.6 L584.7 796.3 L585.8 797.7 L586.9 795.2 L588 797.3 L589.1 797.9 L590.2 794.8 L591.3 795.4 L592.4 796.1 L593.5 798.5 L594.6 796.6 L595.7 796.2 L596.8 796.9 L597.9 797.7 L599 795.8 L600.1 796.8 L601.2 797 L602.3 797.6 L603.4 797 L604.5 796 L605.6 794.7 L606.7 795.5 L607.8 796.3 L608.9 796.1 L610 794.8 L611.1 795.6 L612.2 798.4 L613.3 797 L614.4 797.6 L615.5 796.5 L616.6 797.8 L617.7 796.1 L618.8 794.7 L619.9 795.3 L621 798.1 L622.1 797.6 L623.2 797.9 L624.3 797.7 L625.4 796.1 L626.5 795.2 L627.6 795.5 L628.7 798.6 L629.8 797.6 L630.9 795.5 L632 795.4 L633.1 795.5 L634.2 795.3 L635.3 795.6 L636.4 797.6 L637.5 798.4 L638.6 796.6 L639.7 795.2 L640.8 795.2 L641.9 798.3 L643 796.2 L644.1 794.7 L645.2 798.5 L646.3 795.2 L647.4 795.5 L648.5 796.4 L649.6 797 L650.7 794.7 L651.8 797.4 L652.9 795.5 L654 796.4 L655.1 797.9 L656.2 795.5 L657.3 796.1 L658.4 797.8 L659.5 795.1 L660.6 794.9 L661.7 795.5 L662.8 796.9 L663.9 794.9 L665 798.2 L666.1 796.8 L667.2 794.9 L668.3 798.2 L669.4 798.6 L670.5 794.7 L671.6 798.6 L672.7 797.9 L673.8 795.2 L674.9 795.8 L676 791.6 L677.1 796 L678.2 795.7 L679.3 798.4 L680.4 795.9 L681.5 796 L682.6 795.5 L683.7 797.5 L684.8 795.3 L685.9 795.3 L687 795.1 L688.1 795 L689.2 797.6 L690.3 795.1 L691.4 795.1 L692.5 795.4 L693.6 798.3 L694.7 795.6 L695.8 795.9 L696.9 795.6 L698 795.4 L699.1 795 L700.2 796.3 L701.3 795.8 L702.4 793.4 L703.5 797.1 L704.6 798 L705.7 798.6 L706.8 796.7 L707.9 796.9 L709 791.6 L710.1 794.8 L711.2 795.1 L712.3 798.4 L713.4 794.8 L714.5 794.8 L715.6 798 L716.7 798.5 L717.8 791.8 L718.9 795.8 L720 798.1 L721.1 797.4 L722.2 797.3 L723.3 798 L724.4 798.6 L725.5 794.9 L726.6 795.1 L727.7 794.9 L728.8 797.3 L729.9 794.9 L731 796.4 L732.1 797 L733.2 797.3 L734.3 795 L735.4 795 L736.5 797.5 L737.6 794.6 L738.7 794.3 L739.8 794.3 L740.9 794.1 L742 796.5 L743.1 797.8 L744.2 795.5 L745.3 798.3 L746.4 797.8 L747.5 796.3 L748.6 793.8 L749.7 797.3 L750.8 798.6 L751.9 797.6 L753 798 L754.1 796.5 L755.2 795.8 L756.3 795.8 L757.4 795.1 L758.5 793.4 L759.6 797.7 L760.7 795.3 L761.8 797.9 L762.9 796.5 L764 795.7 L765.1 796.6 L766.2 798.1 L767.3 796.3 L768.4 794.9 L769.5 796.5 L770.6 797.3 L771.7 794.7 L772.8 795.2 L773.9 794.9 L775 797.2 L776.1 796.6 L777.2 795.5 L778.3 791.9 L779.4 797.6 L780.5 794.9 L781.6 796.9 L782.7 796 L783.8 796.6 L784.9 798 L786 797 L787.1 796.4 L788.2 796 L789.3 796.4 L790.4 797.7 L791.5 796.3 L792.6 797.7 L793.7 794.7 L794.8 798.4 L795.9 797.1 L797 797.7 L798.1 797.3 L799.2 795.2 L800.3 795.6 L801.4 795.8 L802.5 798.6 L803.6 794.8 L804.7 795.1 L805.8 796.8 L806.9 796.4 L808 795.2 L809.1 797.4 L810.2 798.3 L811.3 795.3 L812.4 791.8 L813.5 796.6 L814.6 794.6 L815.7 797.1 L816.8 794.8 L817.9 797.1 L819 795.1 L820.1 796.1 L821.2 795.3 L822.3 795.3 L823.4 795.9 L824.5 796.9 L825.6 796.6 L826.7 796.2 L827.8 798.5 L828.9 795.9 L830 796.3 L831.1 796.4 L832.2 794.6 L833.3 798 L834.4 798 L835.5 792.2 L836.6 797.3 L837.7 797.6 L838.8 797.2 L839.9 795 L841 793 L842.1 795.2 L843.2 797.4 L844.3 794.8 L845.4 797.8 L846.5 795.4 L847.6 797.9 L848.7 798.2 L849.8 798.4 L850.9 797.7 L852 798.5 L853.1 795.8 L854.2 798.1 L855.3 798 L856.4 794.8 L857.5 797.7 L858.6 797.6 L859.7 797.7 L860.8 798.2 L861.9 795.5 L863 797.4 L864.1 795.2 L865.2 796.4 L866.3 798.4 L867.4 795.7 L868.5 795.5 L869.6 797.5 L870.7 797.2 L871.8 797.6 L872.9 797.9 L874 792.6 L875.1 797.8 L876.2 797.4 L877.3 796.3 L878.4 792.7 L879.5 792.4 L880.6 796.2 L881.7 795.4 L882.8 798.3 L883.9 795.3 L885 796.9 L886.1 795.3 L887.2 795.8 L888.3 795 L889.4 795.4 L890.5 796.1 L891.6 797.2 L892.7 798.1 L893.8 797.7 L894.9 797.2 L896 796.4 L897.1 795.6 L898.2 796.8 L899.3 797.5 L900.4 797.5 L901.5 798.2 L902.6 794.8 L903.7 795.6 L904.8 796.4 L905.9 794.7 L907 796 L908.1 797.6 L909.2 795.5 L910.3 796.1 L911.4 795.5 L912.5 797.9 L913.6 796.4 L914.7 798.5 L915.8 795.8 L916.9 796.6 L918 798.3 L919.1 791.6 L920.2 794.7 L921.3 795.2 L922.4 796 L923.5 796.9 L924.6 798 L925.7 797.2 L926.8 796.8 L927.9 794.7 L929 798.4 L930.1 796.3 L931.2 797.4 L932.3 797.9 L933.4 796 L934.5 796.5 L935.6 797.9 L936.7 795.2 L937.8 797.6 L938.9 796.3 L940 798.3 L941.1 795.2 L942.2 798.2 L943.3 795.3 L944.4 796.4 L945.5 798.4 L946.6 796.2 L947.7 796.9 L948.8 796.4 L949.9 795.6 L951 795.3 L952.1 791.7 L953.2 798.2 L954.3 794.9 L955.4 796.8 L956.5 798.6 L957.6 796.4 L958.7 798.1 L959.8 792.2 L960.9 798 L962 798.5 L963.1 797.1 L964.2 797.1 L965.3 797.3 L966.4 798.5 L967.5 796.3 L968.6 793.2 L968.6 809.9 L967.5 813.3 L966.4 809.2 L965.3 809.4 L964.2 812.1 L963.1 810.5 L962 809.3 L960.9 810.6 L959.8 812.4 L958.7 812.1 L957.6 809.7 L956.5 809 L955.4 811.9 L954.3 811.3 L953.2 810.8 L952.1 811.5 L951 809 L949.9 809.9 L948.8 812.3 L947.7 812.1 L946.6 809.4 L945.5 812.7 L944.4 811.7 L943.3 810.1 L942.2 812.6 L941.1 810.8 L940 810.2 L938.9 809 L937.8 810.5 L936.7 809.6 L935.6 812.2 L934.5 810.8 L933.4 810.1 L932.3 811.3 L931.2 813.1 L930.1 812.4 L929 811.3 L927.9 812.4 L926.8 812.5 L925.7 809.3 L924.6 809.7 L923.5 811.2 L922.4 810.6 L921.3 811.7 L920.2 811.5 L919.1 808.9 L918 811.3 L916.9 809.2 L915.8 812.2 L914.7 810.8 L913.6 810 L912.5 811.9 L911.4 811.9 L910.3 812 L909.2 812 L908.1 812.7 L907 811.1 L905.9 810.7 L904.8 809 L903.7 808.9 L902.6 808.8 L901.5 809.9 L900.4 809.3 L899.3 810 L898.2 811.7 L897.1 809.2 L896 809.9 L894.9 809.8 L893.8 810.6 L892.7 811.4 L891.6 810.2 L890.5 813.9 L889.4 809.6 L888.3 811.6 L887.2 810.3 L886.1 814.2 L885 812.3 L883.9 809.7 L882.8 811.4 L881.7 809.4 L880.6 808.7 L879.5 809.7 L878.4 810 L877.3 811.5 L876.2 811.1 L875.1 812.9 L874 808.7 L872.9 809 L871.8 812 L870.7 810.2 L869.6 808.7 L868.5 812.1 L867.4 809.7 L866.3 809.8 L865.2 810 L864.1 809.9 L863 810.1 L861.9 810.1 L860.8 810.6 L859.7 811 L858.6 812.2 L857.5 810.4 L856.4 809.4 L855.3 810 L854.2 810.3 L853.1 808.9 L852 811.2 L850.9 809.3 L849.8 809 L848.7 810.7 L847.6 812.5 L846.5 809.5 L845.4 809.8 L844.3 809.5 L843.2 811 L842.1 809.8 L841 809.6 L839.9 810.9 L838.8 813.5 L837.7 809 L836.6 811.4 L835.5 808.8 L834.4 810.7 L833.3 811.6 L832.2 810.9 L831.1 809.6 L830 811.3 L828.9 808.6 L827.8 810.2 L826.7 810 L825.6 809.3 L824.5 809.2 L823.4 811.9 L822.3 810.6 L821.2 809.2 L820.1 812.6 L819 812.5 L817.9 810.2 L816.8 811.3 L815.7 810 L814.6 810.6 L813.5 812.3 L812.4 808.6 L811.3 812.4 L810.2 812.3 L809.1 809.1 L808 810.6 L806.9 810.1 L805.8 811.5 L804.7 811 L803.6 810.9 L802.5 811.7 L801.4 812.3 L800.3 811.6 L799.2 811.9 L798.1 810 L797 812.4 L795.9 810.3 L794.8 812.1 L793.7 809.7 L792.6 810.8 L791.5 808.6 L790.4 809.4 L789.3 811 L788.2 809.4 L787.1 812 L786 809.7 L784.9 809.1 L783.8 809.6 L782.7 809 L781.6 812.4 L780.5 811.1 L779.4 811.3 L778.3 812.1 L777.2 812.3 L776.1 808.6 L775 810.7 L773.9 809.6 L772.8 808.8 L771.7 811.8 L770.6 809.5 L769.5 810.2 L768.4 810.1 L767.3 811.6 L766.2 810.9 L765.1 809.7 L764 808.7 L762.9 811.4 L761.8 808.6 L760.7 808.7 L759.6 809.3 L758.5 810.7 L757.4 812.4 L756.3 810.1 L755.2 811.9 L754.1 810.4 L753 813.2 L751.9 809.3 L750.8 812.2 L749.7 812 L748.6 811.5 L747.5 809.4 L746.4 811 L745.3 811 L744.2 811.4 L743.1 810.9 L742 809.3 L740.9 809.1 L739.8 812.5 L738.7 812.2 L737.6 812.6 L736.5 809.6 L735.4 811.3 L734.3 812.2 L733.2 809.2 L732.1 809.2 L731 809.1 L729.9 809.4 L728.8 811.9 L727.7 812 L726.6 809.1 L725.5 809.4 L724.4 814.6 L723.3 809.5 L722.2 809.6 L721.1 810.9 L720 811.6 L718.9 814.3 L717.8 811.9 L716.7 809.6 L715.6 812.5 L714.5 811.3 L713.4 809.6 L712.3 811 L711.2 810.4 L710.1 808.9 L709 809.6 L707.9 812.4 L706.8 810.8 L705.7 808.7 L704.6 811 L703.5 809 L702.4 809.2 L701.3 810 L700.2 809.3 L699.1 812.1 L698 811.7 L696.9 811.8 L695.8 810.4 L694.7 812.3 L693.6 810.8 L692.5 811.3 L691.4 810.9 L690.3 808.7 L689.2 810.3 L688.1 815 L687 810.1 L685.9 811 L684.8 809.9 L683.7 808.8 L682.6 812.4 L681.5 811.1 L680.4 809.1 L679.3 810 L678.2 809.2 L677.1 811.9 L676 814.6 L674.9 810.4 L673.8 811.5 L672.7 808.8 L671.6 811.5 L670.5 808.9 L669.4 808.6 L668.3 811.2 L667.2 812.5 L666.1 808.6 L665 811.8 L663.9 811.9 L662.8 809.8 L661.7 810.8 L660.6 811.2 L659.5 809.3 L658.4 811.3 L657.3 811.4 L656.2 812.2 L655.1 812.3 L654 811.9 L652.9 808.7 L651.8 809.8 L650.7 811.2 L649.6 810.6 L648.5 811.9 L647.4 809.4 L646.3 810 L645.2 811.5 L644.1 810.6 L643 811.3 L641.9 814.3 L640.8 810.1 L639.7 810.4 L638.6 813.9 L637.5 810.4 L636.4 809.5 L635.3 810.3 L634.2 809.3 L633.1 811.3 L632 809.2 L630.9 810 L629.8 809 L628.7 808.6 L627.6 809.1 L626.5 808.8 L625.4 811.2 L624.3 809.8 L623.2 808.6 L622.1 810.1 L621 811.9 L619.9 810.4 L618.8 810 L617.7 810.5 L616.6 809.1 L615.5 809.4 L614.4 809.5 L613.3 810.3 L612.2 812.8 L611.1 809 L610 809.4 L608.9 811.9 L607.8 810.7 L606.7 812.4 L605.6 808.7 L604.5 811.7 L603.4 811.3 L602.3 810.3 L601.2 811.7 L600.1 809.8 L599 812 L597.9 811.5 L596.8 810.9 L595.7 810.2 L594.6 811.1 L593.5 810.2 L592.4 809 L591.3 811.5 L590.2 809 L589.1 812.5 L588 810.7 L586.9 809.2 L585.8 809.3 L584.7 809.1 L583.6 809.2 L582.5 809.2 L581.4 811.6 L580.3 809.5 L579.2 812.2 L578.1 812.1 L577 810.2 L575.9 811.4 L574.8 809 L573.7 809.7 L572.6 810 L571.5 810.5 L570.4 814.8 L569.3 815 L568.2 810.7 L567.1 810.3 L566 815.1 L564.9 810 L563.8 808.6 L562.7 811.6 L561.6 811.1 L560.5 812 L559.4 809 L558.3 808.8 L557.2 810 L556.1 811.4 L555 808.7 L553.9 809 L552.8 808.9 L551.7 810.9 L550.6 811.4 L549.5 811.2 L548.4 809.5 L547.3 811.6 L546.2 809.6 L545.1 812.5 L544 811.7 L542.9 811.4 L541.8 809.9 L540.7 809.5 L539.6 811.6 L538.5 814.9 L537.4 813 L536.3 810.6 L535.2 812.4 L534.1 811.9 L533 808.7 L531.9 812.3 L530.8 810.8 L529.7 813.3 L528.6 808.9 L527.5 809.1 L526.4 810.9 L525.3 809 L524.2 814.3 L523.1 810.6 L522 808.7 L520.9 810.9 L519.8 811.9 L518.7 810.3 L517.6 812.6 L516.5 811.1 L515.4 810.9 L514.3 811.1 L513.2 809.2 L512.1 809.2 L511 813.7 L509.9 810.6 L508.8 812.2 L507.7 808.8 L506.6 812.3 L505.5 809.3 L504.4 812 L503.3 810.6 L502.2 811.5 L501.1 810.6 L500 809.1 L498.9 810.4 L497.8 810.5 L496.7 813.5 L495.6 810.3 L494.5 811 L493.4 811.6 L492.3 814.6 L491.2 810.6 L490.1 811.9 L489 811.7 L487.9 812.2 L486.8 810.5 L485.7 809.3 L484.6 809 L483.5 809.1 L482.4 808.9 L481.3 808.6 L480.2 810.2 L479.1 808.6 L478 810 L476.9 810 L475.8 809.8 L474.7 809.2 L473.6 810.2 L472.5 811.8 L471.4 811.3 L470.3 814.3 L469.2 809.1 L468.1 811 L467 809.6 L465.9 812.3 L464.8 809 L463.7 815.1 L462.6 812.6 L461.5 810.6 L460.4 810.9 L459.3 809.6 L458.2 810.8 L457.1 811.2 L456 811.1 L454.9 811.4 L453.8 809.6 L452.7 809.9 L451.6 812.7 L450.5 811.7 L449.4 811 L448.3 811.8 L447.2 810.3 L446.1 812.4 L445 812.4 L443.9 808.6 L442.8 809.6 L441.7 809.9 L440.6 812.3 L439.5 814.8 L438.4 812.2 L437.3 810.1 L436.2 815 L435.1 812.5 L434 809.7 L432.9 810.1 L431.8 811.6 L430.7 812.3 L429.6 812.2 L428.5 809.1 L427.4 809.1 L426.3 809.5 L425.2 809.7 L424.1 811.9 L423 810.6 L421.9 811.3 L420.8 809.5 L419.7 810.3 L418.6 809.8 L417.5 809.5 L416.4 812.4 L415.3 811 L414.2 810.7 L413.1 811.1 L412 811.2 L410.9 808.7 L409.8 811.2 L408.7 810.7 L407.6 812.5 L406.5 810.1 L405.4 812.2 L404.3 815.2 L403.2 810.2 L402.1 812 L401 812.5 L399.9 810.1 L398.8 811.6 L397.7 809.5 L396.6 809.3 L395.5 812.2 L394.4 809.4 L393.3 810.8 L392.2 812.5 L391.1 810.5 L390 809.7 L388.9 811.5 L387.8 812.4 L386.7 812.1 L385.6 810.6 L384.5 809.7 L383.4 809.7 L382.3 812.6 L381.2 812.2 L380.1 811.9 L379 813Z"/>
<path d="M969 793.2 L970.1 791.7 L971.2 792.2 L972.3 790.9 L973.4 791.7 L974.5 793.6 L975.6 792.1 L976.7 792.2 L977.8 793.6 L978.9 792.9 L980 793.7 L981.1 792.7 L982.2 793.8 L983.3 791.7 L984.4 793.1 L985.5 793.9 L986.6 791.8 L987.7 793.1 L988.8 792.8 L989.9 792.2 L991 793.2 L992.1 791.3 L993.2 792.1 L994.3 791.7 L995.4 793.7 L996.5 793.2 L997.6 792.1 L998.7 791.8 L999.8 791.4 L1000.9 793.2 L1002 792 L1003.1 789.1 L1004.2 792.9 L1005.3 792.9 L1006.4 792.7 L1007.5 793.1 L1008.6 791.9 L1009.7 794.1 L1010.8 789.5 L1011.9 789.7 L1013 793 L1014.1 791.6 L1015.2 794.3 L1016.3 793.4 L1017.4 790.3 L1018.5 791.6 L1019.6 793.7 L1020.7 792.9 L1021.8 791.8 L1022.9 794.2 L1024 792.6 L1025.1 793.4 L1026.2 792.9 L1027.3 794.2 L1028.4 791.6 L1029.5 791.4 L1030.6 792.2 L1031.7 791.7 L1032.8 794 L1033.9 793 L1035 789.7 L1036.1 794.2 L1037.2 792.5 L1038.3 791.5 L1039.4 791.8 L1040.5 793.2 L1041.6 794.1 L1042.7 792.2 L1043.8 791.4 L1044.9 793.4 L1046 791.4 L1047.1 792.5 L1048.2 793.5 L1049.3 791.4 L1050.4 793.3 L1051.5 793.3 L1052.6 793.8 L1053.7 792.6 L1054.8 790 L1055.9 794 L1057 793.2 L1058.1 793.8 L1059.2 791.6 L1060.3 791.6 L1061.4 794 L1062.5 792.8 L1063.6 793.7 L1064.7 790.3 L1065.8 792.8 L1066.9 793.6 L1068 794.3 L1069.1 791.5 L1070.2 792.5 L1071.3 793.6 L1072.4 792.4 L1073.5 791.8 L1074.6 791.4 L1075.7 793.6 L1076.8 793.3 L1077.9 793.3 L1079 792.8 L1080.1 792 L1081.2 791.7 L1082.3 793.3 L1083.4 792 L1084.5 791.5 L1085.6 792.5 L1086.7 791.6 L1087.8 791.4 L1088.9 793.6 L1090 792.9 L1091.1 792.2 L1092.2 791.9 L1093.3 793.1 L1094.4 793.3 L1095.5 791.9 L1096.6 791.8 L1097.7 793.3 L1098.8 792.4 L1099.9 792.1 L1101 791.5 L1102.1 793.8 L1103.2 793.6 L1104.3 793.1 L1105.4 791.2 L1106.5 792.7 L1107.6 792.9 L1108.7 794 L1109.8 793.2 L1110.9 794.1 L1112 793.2 L1113.1 792.7 L1114.2 790.8 L1115.3 792.2 L1116.4 791.5 L1117.5 793.3 L1118.6 793.9 L1119.7 793.1 L1120.8 791.9 L1121.9 791.3 L1123 793.2 L1124.1 793.5 L1125.2 791.8 L1126.3 791.6 L1127.4 793.4 L1128.5 791.3 L1129.6 791.4 L1130.7 794 L1131.8 791.3 L1132.9 792.9 L1134 793.4 L1135.1 792.6 L1136.2 793.2 L1137.3 792.4 L1138.4 791.7 L1139.5 793.5 L1140.6 792 L1141.7 794 L1142.8 792.4 L1143.9 791.4 L1145 791.8 L1146.1 792.7 L1147.2 793.9 L1148.3 792.8 L1149.4 793.1 L1150.5 791.9 L1151.6 792 L1152.7 792 L1153.8 793.9 L1154.9 793.5 L1156 793.5 L1157.1 792.2 L1158.2 792.1 L1159.3 794.3 L1160.4 794.2 L1161.5 794.2 L1162.6 792.4 L1163.7 793.7 L1164.8 789.4 L1165.9 794.3 L1167 792.4 L1168.1 792.7 L1168.1 803.9 L1167 804.3 L1165.9 803.6 L1164.8 803.7 L1163.7 804.5 L1162.6 803.1 L1161.5 804.7 L1160.4 803.5 L1159.3 804 L1158.2 802.3 L1157.1 805.1 L1156 802.7 L1154.9 802.3 L1153.8 804.3 L1152.7 804.6 L1151.6 803.6 L1150.5 804.7 L1149.4 803.9 L1148.3 804.7 L1147.2 803.1 L1146.1 803.7 L1145 803.2 L1143.9 804.4 L1142.8 804.2 L1141.7 803 L1140.6 804.2 L1139.5 802.8 L1138.4 803.8 L1137.3 805.3 L1136.2 804.9 L1135.1 804.2 L1134 802.5 L1132.9 804.7 L1131.8 802.9 L1130.7 802.9 L1129.6 802.7 L1128.5 805.1 L1127.4 802.2 L1126.3 802.6 L1125.2 803.1 L1124.1 802.6 L1123 805.1 L1121.9 804.1 L1120.8 803 L1119.7 804.4 L1118.6 806.4 L1117.5 802.5 L1116.4 806.8 L1115.3 803.8 L1114.2 805.1 L1113.1 804.2 L1112 804.1 L1110.9 804 L1109.8 805 L1108.7 803.8 L1107.6 804.6 L1106.5 802.1 L1105.4 802.6 L1104.3 803.6 L1103.2 804.9 L1102.1 802.9 L1101 804.2 L1099.9 803.4 L1098.8 803 L1097.7 802.7 L1096.6 803.4 L1095.5 803.6 L1094.4 803.9 L1093.3 802.3 L1092.2 804.2 L1091.1 804.3 L1090 802.8 L1088.9 804.7 L1087.8 802.4 L1086.7 803 L1085.6 803.4 L1084.5 804.4 L1083.4 802.5 L1082.3 802.6 L1081.2 804.5 L1080.1 804.1 L1079 803.6 L1077.9 805.1 L1076.8 802.5 L1075.7 804.4 L1074.6 803.3 L1073.5 806 L1072.4 804.2 L1071.3 806.4 L1070.2 804.5 L1069.1 802.3 L1068 803.3 L1066.9 804.4 L1065.8 804.5 L1064.7 804.9 L1063.6 802.5 L1062.5 803.2 L1061.4 803.5 L1060.3 802.4 L1059.2 803.6 L1058.1 805 L1057 803.2 L1055.9 804.1 L1054.8 803.5 L1053.7 802.4 L1052.6 804.5 L1051.5 803.5 L1050.4 807.5 L1049.3 802.2 L1048.2 804.9 L1047.1 803.8 L1046 802.3 L1044.9 803.1 L1043.8 805.2 L1042.7 802.4 L1041.6 803.5 L1040.5 804.1 L1039.4 807.6 L1038.3 803.1 L1037.2 803.1 L1036.1 804.7 L1035 802.5 L1033.9 804.1 L1032.8 802.3 L1031.7 802.5 L1030.6 804.2 L1029.5 803.8 L1028.4 802.3 L1027.3 805.9 L1026.2 805 L1025.1 804.3 L1024 803.1 L1022.9 803 L1021.8 802.7 L1020.7 803.6 L1019.6 802.2 L1018.5 804.6 L1017.4 803.4 L1016.3 802.9 L1015.2 805.2 L1014.1 802.5 L1013 803.9 L1011.9 803.6 L1010.8 803.8 L1009.7 804.6 L1008.6 804.5 L1007.5 802.2 L1006.4 804.6 L1005.3 804.9 L1004.2 803.5 L1003.1 804.4 L1002 803.2 L1000.9 804.1 L999.8 802.7 L998.7 803.2 L997.6 803 L996.5 802.2 L995.4 803.4 L994.3 802.3 L993.2 802.9 L992.1 803.8 L991 805.6 L989.9 803.2 L988.8 804.6 L987.7 805.2 L986.6 803.7 L985.5 802.8 L984.4 804.7 L983.3 807.3 L982.2 804.6 L981.1 803.7 L980 802.5 L978.9 804.3 L977.8 804 L976.7 803.1 L975.6 803.3 L974.5 804 L973.4 803.7 L972.3 805.1 L971.2 803.1 L970.1 807 L969 802.8Z"/>
<path d="M1655.6 796.1 L1656.7 795.9 L1657.8 795.4 L1658.9 795.3 L1660 796 L1661.1 799.1 L1662.2 797.8 L1663.3 797 L1664.4 797.3 L1665.5 798.6 L1666.6 795.6 L1667.7 795.6 L1668.8 795.9 L1669.9 798.4 L1671 796.5 L1672.1 798.4 L1673.2 796.4 L1674.3 797.9 L1675.4 795.5 L1676.5 797.4 L1677.6 795.3 L1678.7 797.5 L1679.8 795.4 L1680.9 798.3 L1682 797.3 L1683.1 798.8 L1684.2 797.4 L1685.3 796 L1686.4 798.6 L1687.5 797.2 L1688.6 796.6 L1689.7 795.7 L1690.8 796.6 L1691.9 797.6 L1693 797.8 L1694.1 796.1 L1695.2 798.4 L1696.3 796.3 L1697.4 797.1 L1698.5 799 L1699.6 796.4 L1700.7 797.9 L1701.8 796.4 L1702.9 798.2 L1704 796.1 L1705.1 796.6 L1706.2 795.2 L1707.3 796.2 L1708.4 793.5 L1709.5 798.8 L1710.6 795.6 L1711.7 798.4 L1712.8 797 L1713.9 797.8 L1715 797.8 L1716.1 797.6 L1717.2 798.5 L1718.3 796.1 L1719.4 796.1 L1720.5 798 L1721.6 797.6 L1722.7 796.4 L1723.8 797.1 L1724.9 796.6 L1726 796.4 L1727.1 796.8 L1728.2 796.6 L1729.3 796.6 L1730.4 797.3 L1731.5 796.4 L1732.6 796.1 L1733.7 798 L1734.8 792.2 L1735.9 795.5 L1737 798 L1738.1 797.9 L1739.2 797.3 L1740.3 795.5 L1741.4 796.2 L1742.5 796 L1743.6 796.6 L1744.7 798.5 L1745.8 797.1 L1746.9 797.1 L1748 798.9 L1749.1 798.4 L1750.2 798.1 L1751.3 798.1 L1752.4 796.4 L1753.5 798.8 L1754.6 797.2 L1755.7 797.7 L1756.8 795.4 L1757.9 797.6 L1759 798.8 L1760.1 796.1 L1761.2 798.3 L1762.3 797.3 L1763.4 797.8 L1764.5 796.6 L1765.6 797 L1766.7 797.3 L1767.8 795.9 L1768.9 797.7 L1770 798.8 L1771.1 798.9 L1772.2 795.4 L1773.3 797.5 L1774.4 797.3 L1775.5 799 L1776.6 797.2 L1777.7 796.4 L1778.8 796.8 L1779.9 798.5 L1781 797.5 L1782.1 798 L1783.2 797.7 L1784.3 798.4 L1785.4 795.2 L1786.5 798.7 L1787.6 795.7 L1788.7 796.6 L1789.8 797.3 L1790.9 797.8 L1792 798.6 L1793.1 795.4 L1794.2 795.9 L1794.2 809.6 L1793.1 810.8 L1792 811.4 L1790.9 812 L1789.8 808.7 L1788.7 809.1 L1787.6 809.3 L1786.5 810.4 L1785.4 809.4 L1784.3 810.5 L1783.2 808.9 L1782.1 808.9 L1781 811.9 L1779.9 811.5 L1778.8 811.8 L1777.7 810.5 L1776.6 809.9 L1775.5 811 L1774.4 809.3 L1773.3 810.7 L1772.2 811.1 L1771.1 809 L1770 811.1 L1768.9 810.8 L1767.8 809.3 L1766.7 809.6 L1765.6 809.7 L1764.5 809.9 L1763.4 809.1 L1762.3 812.3 L1761.2 810.5 L1760.1 808.6 L1759 810.4 L1757.9 809.7 L1756.8 811 L1755.7 810.4 L1754.6 808.7 L1753.5 811.1 L1752.4 810.4 L1751.3 809.3 L1750.2 811.2 L1749.1 810.5 L1748 810.2 L1746.9 809.9 L1745.8 810.2 L1744.7 809.9 L1743.6 809.6 L1742.5 809.5 L1741.4 809.4 L1740.3 809.9 L1739.2 812 L1738.1 811.5 L1737 810 L1735.9 809.3 L1734.8 810.1 L1733.7 810.4 L1732.6 811.6 L1731.5 809.7 L1730.4 812 L1729.3 810.8 L1728.2 811 L1727.1 811.4 L1726 812.1 L1724.9 810.7 L1723.8 810.7 L1722.7 810.2 L1721.6 813.9 L1720.5 809.4 L1719.4 808.8 L1718.3 809 L1717.2 811.5 L1716.1 812.3 L1715 811.9 L1713.9 810.2 L1712.8 811.4 L1711.7 809.3 L1710.6 810.1 L1709.5 809.4 L1708.4 811.7 L1707.3 808.7 L1706.2 809.8 L1705.1 809.5 L1704 812.2 L1702.9 809.7 L1701.8 810.3 L1700.7 809.3 L1699.6 808.9 L1698.5 812.4 L1697.4 811.9 L1696.3 811.6 L1695.2 812.5 L1694.1 810.8 L1693 811.7 L1691.9 809.1 L1690.8 810.7 L1689.7 811.8 L1688.6 813.5 L1687.5 810.1 L1686.4 808.8 L1685.3 809.7 L1684.2 810.2 L1683.1 810.1 L1682 809.9 L1680.9 810.8 L1679.8 811 L1678.7 812 L1677.6 812.1 L1676.5 808.9 L1675.4 811.2 L1674.3 808.6 L1673.2 808.6 L1672.1 810.9 L1671 810.3 L1669.9 811.3 L1668.8 812.3 L1667.7 809.2 L1666.6 808.7 L1665.5 812 L1664.4 811.4 L1663.3 808.7 L1662.2 808.8 L1661.1 811.8 L1660 808.7 L1658.9 809.6 L1657.8 809.1 L1656.7 808.9 L1655.6 810.9Z"/>
</g>
<g fill="none" stroke="#d2983a" stroke-width="1.1" stroke-linejoin="round">
<path d="M284 893 L284.6 901 L285.2 910 L285.8 892.8 L286.4 907.2 L287 900.7 L287.6 908.6 L288.2 904.8 L288.8 894.9 L289.4 908.9 L290 900.2 L290.6 890.5 L291.2 890.1 L291.8 900.3 L292.4 899.5 L293 896.3 L293.6 893"/>
<path d="M1169 798.1 L1169.7 803.7 L1170.4 803.7 L1171.1 800.1 L1171.8 794.2 L1172.5 798.2 L1173.2 800.3 L1173.9 796.2 L1174.6 793.4 L1175.3 804.3 L1176 803.5 L1176.7 794.5 L1177.4 798.4 L1178.1 800.1 L1178.8 796.4 L1179.5 793.8 L1180.2 801.6 L1180.9 801.9 L1181.6 880.1 L1182.3 876.1 L1183 879.6 L1183.7 876.2 L1184.4 886.2 L1185.1 875.7 L1185.8 878.4 L1186.5 883.9 L1187.2 876.7 L1187.9 876.3 L1188.6 875.9 L1189.3 877 L1190 881.2 L1190.7 884.7 L1191.4 877 L1192.1 877.1 L1192.8 883.9 L1193.5 880 L1194.2 879 L1194.9 876.5 L1195.6 877.9 L1196.3 886.3 L1197 876.4 L1197.7 878.1 L1198.4 883.6 L1199.1 885.4 L1199.8 885.5 L1200.5 880.5 L1201.2 886.1 L1201.9 882 L1202.6 878.4 L1203.3 880.5 L1204 883.3 L1204.7 883.5 L1205.4 876.6 L1206.1 877.3 L1206.8 886.1 L1207.5 876.3 L1208.2 884.5 L1208.9 879 L1209.6 878 L1210.3 878 L1211 880.5 L1211.7 886.5 L1212.4 876.8 L1213.1 884.9 L1213.8 878.8 L1214.5 877.1 L1215.2 883.7 L1215.9 879 L1216.6 877.3 L1217.3 879.9 L1218 884.5 L1218.7 885 L1219.4 881.7 L1220.1 875.2 L1220.8 883.9 L1221.5 882.1 L1222.2 885.4 L1222.9 886 L1223.6 878.9 L1224.3 884.9 L1225 884.5 L1225.7 878.2 L1226.4 879.3 L1227.1 879.4 L1227.8 879.2 L1228.5 879.4 L1229.2 876.4 L1229.9 877.7 L1230.6 885.6 L1231.3 879.8 L1232 882.4 L1232.7 885.3 L1233.4 883.8 L1234.1 877.9 L1234.8 885.7 L1235.5 884.3 L1236.2 886.5 L1236.9 883.5 L1237.6 883.8 L1238.3 884.4 L1239 878 L1239.7 882.6 L1240.4 879.5 L1241.1 884.8 L1241.8 876.6 L1242.5 881.3 L1243.2 879 L1243.9 884.5 L1244.6 879.1 L1245.3 884.8 L1246 884.9 L1246.7 885.2 L1247.4 876.7 L1248.1 885.9 L1248.8 883.7 L1249.5 882.9 L1250.2 882.6 L1250.9 875.7 L1251.6 885.1 L1252.3 881.4 L1253 880.3 L1253.7 879 L1254.4 884.1 L1255.1 884.1 L1255.8 885.1 L1256.5 877.6 L1257.2 879 L1257.9 878 L1258.6 876.3 L1259.3 878.9 L1260 875.4 L1260.7 884.3 L1261.4 877.7 L1262.1 875.9 L1262.8 875.9 L1263.5 883.6 L1264.2 877.4 L1264.9 880.4 L1265.6 879.7 L1266.3 884.3 L1267 886.1 L1267.7 878.7 L1268.4 882.4 L1269.1 885.4 L1269.8 880.5 L1270.5 885.4 L1271.2 883.5 L1271.9 878.7 L1272.6 885.2 L1273.3 881.7 L1274 876.3 L1274.7 881.9 L1275.4 884.6 L1276.1 881.1 L1276.8 880.7 L1277.5 879.9 L1278.2 885.2 L1278.9 882.8 L1279.6 877.5 L1280.3 879.3 L1281 879.3 L1281.7 886.1 L1282.4 883.1 L1283.1 876.5 L1283.8 885.6 L1284.5 875.5 L1285.2 881.9 L1285.9 880.1 L1286.6 883.4 L1287.3 797.9 L1288 794.1 L1288.7 799 L1289.4 802.4 L1290.1 802.1 L1290.8 797.1 L1291.5 795.6 L1292.2 801.6 L1292.9 802.2 L1293.6 795.5 L1294.3 803.2 L1295 804.4 L1295.7 798 L1296.4 797.4 L1297.1 801.2 L1297.8 803.7 L1298.5 795.3 L1299.2 796.5 L1299.9 796.8 L1300.6 801.4 L1301.3 795.1 L1302 799.3 L1302.7 798.8 L1303.4 800.7 L1304.1 794.6 L1304.8 804 L1305.5 804.5 L1306.2 799.5 L1306.9 802.1 L1307.6 795.1 L1308.3 803.5 L1309 799.3 L1309.7 801.7 L1310.4 803 L1311.1 797.2 L1311.8 803.6 L1312.5 795.4 L1313.2 793.3 L1313.9 798.8 L1314.6 803.3 L1315.3 803.4 L1316 804 L1316.7 798.9 L1317.4 803.7 L1318.1 799.4 L1318.8 794.7 L1319.5 800.3 L1320.2 802.2 L1320.9 797.9 L1321.6 799.9 L1322.3 796 L1323 796.2 L1323.7 797.8 L1324.4 881 L1325.1 880.5 L1325.8 876.2 L1326.5 875.2 L1327.2 879 L1327.9 883.3 L1328.6 883.7 L1329.3 877.8 L1330 878 L1330.7 881 L1331.4 877.1 L1332.1 882 L1332.8 885.5 L1333.5 877.4 L1334.2 881.8 L1334.9 883.4 L1335.6 883.7 L1336.3 883.3 L1337 801.2 L1337.7 796.1 L1338.4 802.6 L1339.1 803.6 L1339.8 793.6 L1340.5 803.9 L1341.2 798.1 L1341.9 794 L1342.6 875.9 L1343.3 884.3 L1344 882.9 L1344.7 876.7 L1345.4 880.4 L1346.1 882.4 L1346.8 886.6 L1347.5 879 L1348.2 883.9 L1348.9 877.9 L1349.6 877.4 L1350.3 877 L1351 879.8 L1351.7 882.2 L1352.4 878.6 L1353.1 877 L1353.8 877.6 L1354.5 876.1 L1355.2 877.3 L1355.9 878.7 L1356.6 880.9 L1357.3 877.2 L1358 880.6 L1358.7 880.2 L1359.4 804.2 L1360.1 798.6 L1360.8 803.9 L1361.5 798.4 L1362.2 795.3 L1362.9 799.8 L1363.6 794.7 L1364.3 794.9 L1365 793.8 L1365.7 801.1 L1366.4 886.2 L1367.1 879.7 L1367.8 879.2 L1368.5 880 L1369.2 879.1 L1369.9 883 L1370.6 879.6 L1371.3 876.9 L1372 885 L1372.7 881.7 L1373.4 875.2 L1374.1 884.9 L1374.8 883.5 L1375.5 879.2 L1376.2 882.3 L1376.9 885.7 L1377.6 879.7 L1378.3 880.1 L1379 878.5 L1379.7 881.5 L1380.4 882.7 L1381.1 883.6 L1381.8 886 L1382.5 876.8 L1383.2 797.2 L1383.9 802.8 L1384.6 802.1 L1385.3 799.8 L1386 800.8 L1386.7 796.9 L1387.4 803.9 L1388.1 799.3 L1388.8 797.6 L1389.5 877.2 L1390.2 876.4 L1390.9 885.4 L1391.6 884.3 L1392.3 875.4 L1393 878.8 L1393.7 880.6 L1394.4 880.8 L1395.1 879.3 L1395.8 885.4 L1396.5 879.1 L1397.2 881.2 L1397.9 885.8 L1398.6 882.5 L1399.3 880.6 L1400 878.9 L1400.7 879.6 L1401.4 882.1 L1402.1 884.1 L1402.8 878.1 L1403.5 879.4 L1404.2 879.6 L1404.9 879.3 L1405.6 803.5 L1406.3 799.2 L1407 796.2 L1407.7 796.8 L1408.4 802.4 L1409.1 794.8 L1409.8 800.9 L1410.5 793.3 L1411.2 877.3 L1411.9 875.8 L1412.6 884.4 L1413.3 876.8 L1414 877.7 L1414.7 875.8 L1415.4 878.1 L1416.1 883.5 L1416.8 883.4 L1417.5 885.6 L1418.2 886 L1418.9 881.4 L1419.6 885.7 L1420.3 876.1 L1421 885.7 L1421.7 880.1 L1422.4 877.3 L1423.1 883.7 L1423.8 885 L1424.5 879.5 L1425.2 876.2 L1425.9 885.1 L1426.6 883.8 L1427.3 799.9 L1428 804.2 L1428.7 793.4 L1429.4 793.6 L1430.1 794.4 L1430.8 793.3 L1431.5 801.1 L1432.2 800.2 L1432.9 876.4 L1433.6 877 L1434.3 877.2 L1435 882.1 L1435.7 882.8 L1436.4 886.2 L1437.1 879.2 L1437.8 886.4 L1438.5 880.1 L1439.2 797.5 L1439.9 795.9 L1440.6 795.7 L1441.3 804.2 L1442 804.4 L1442.7 801.1 L1443.4 795 L1444.1 795.1 L1444.8 876.9 L1445.5 879.1 L1446.2 883.6 L1446.9 875.8 L1447.6 881.2 L1448.3 882.9 L1449 875.5 L1449.7 880.2 L1450.4 884.2 L1451.1 881.7 L1451.8 880.3 L1452.5 885.2 L1453.2 882 L1453.9 879 L1454.6 879.7 L1455.3 885.9 L1456 885 L1456.7 885.6 L1457.4 881.5 L1458.1 876.7 L1458.8 877.1 L1459.5 879.5 L1460.2 883 L1460.9 875.2 L1461.6 884.3 L1462.3 884.1 L1463 881 L1463.7 875.2 L1464.4 884.3 L1465.1 879.9 L1465.8 882.8 L1466.5 881.7 L1467.2 883.5 L1467.9 879.8 L1468.6 886.1 L1469.3 886.1 L1470 885.8 L1470.7 882.2 L1471.4 878.7 L1472.1 797.3 L1472.8 796.1 L1473.5 803.4 L1474.2 802.1 L1474.9 802.1 L1475.6 802.4 L1476.3 804.4 L1477 800.9 L1477.7 796.7 L1478.4 801.7 L1479.1 796 L1479.8 800 L1480.5 794.8 L1481.2 802.9 L1481.9 798.6 L1482.6 796.2 L1483.3 803.6 L1484 876.1 L1484.7 885.8 L1485.4 883.8 L1486.1 876.8 L1486.8 883.9 L1487.5 881.7 L1488.2 885.5 L1488.9 881.8 L1489.6 880 L1490.3 885.8 L1491 876.1 L1491.7 884 L1492.4 876.3 L1493.1 878.3 L1493.8 876.4 L1494.5 885.1 L1495.2 880.2 L1495.9 883.5 L1496.6 878.1 L1497.3 883.5 L1498 882.6 L1498.7 876.2 L1499.4 880.8 L1500.1 883.4 L1500.8 877.6 L1501.5 882.6 L1502.2 878.3 L1502.9 879.4 L1503.6 885.7 L1504.3 885.9 L1505 886.6 L1505.7 880 L1506.4 881.7 L1507.1 884.4 L1507.8 883.8 L1508.5 880.3 L1509.2 885 L1509.9 879.7 L1510.6 886 L1511.3 880.5 L1512 876.5 L1512.7 883.7 L1513.4 876.8 L1514.1 882.9 L1514.8 875.7 L1515.5 886.5 L1516.2 881.3 L1516.9 883.6 L1517.6 876.6 L1518.3 882.4 L1519 879.4 L1519.7 878 L1520.4 884.5 L1521.1 875.5 L1521.8 880.6 L1522.5 876.1 L1523.2 884.9 L1523.9 885.4 L1524.6 875.5 L1525.3 880.4 L1526 880.5 L1526.7 883.4 L1527.4 883.5 L1528.1 879 L1528.8 885.8 L1529.5 877.2 L1530.2 876.7 L1530.9 884.5 L1531.6 876.5 L1532.3 877.2 L1533 880.9 L1533.7 879 L1534.4 877 L1535.1 885.8 L1535.8 880.5 L1536.5 884.1 L1537.2 878 L1537.9 885.6 L1538.6 877.6 L1539.3 885.5 L1540 882.1 L1540.7 886.3 L1541.4 884 L1542.1 882.4 L1542.8 881.2 L1543.5 884.9 L1544.2 880.2 L1544.9 876.2 L1545.6 885.6 L1546.3 884.4 L1547 882.9 L1547.7 883.7 L1548.4 877.8 L1549.1 880.4 L1549.8 884.6 L1550.5 886.2 L1551.2 803.6 L1551.9 794.8 L1552.6 800.9 L1553.3 799.4 L1554 797.7 L1554.7 794.9 L1555.4 794.6 L1556.1 798.4 L1556.8 798.7 L1557.5 796.1 L1558.2 879.3 L1558.9 881.5 L1559.6 883.9 L1560.3 881.9 L1561 877 L1561.7 885.3 L1562.4 879.3 L1563.1 886.1 L1563.8 886.4 L1564.5 876.7 L1565.2 881.8 L1565.9 886.2 L1566.6 879.5 L1567.3 881.4 L1568 878.7 L1568.7 875.4 L1569.4 877.5 L1570.1 876.5 L1570.8 878.4 L1571.5 882.3 L1572.2 881.6 L1572.9 886 L1573.6 883 L1574.3 879.3 L1575 886 L1575.7 882.4 L1576.4 881.3 L1577.1 885 L1577.8 882.8 L1578.5 879.2 L1579.2 882.1 L1579.9 878.6 L1580.6 886.2 L1581.3 877.9 L1582 886.3 L1582.7 875.8 L1583.4 875.2 L1584.1 881.5 L1584.8 877.5 L1585.5 880.9 L1586.2 876.5 L1586.9 884.7 L1587.6 882.8 L1588.3 883 L1589 885.8 L1589.7 886.5 L1590.4 882.9 L1591.1 883.3 L1591.8 875.1 L1592.5 875.7 L1593.2 880 L1593.9 886.2 L1594.6 878.7 L1595.3 881.6 L1596 875.2 L1596.7 879.9 L1597.4 885.5 L1598.1 881.9 L1598.8 884.6 L1599.5 875.3 L1600.2 877.4 L1600.9 795.1 L1601.6 802.6 L1602.3 794.2 L1603 803.7 L1603.7 796.1 L1604.4 803.1 L1605.1 798.9 L1605.8 796.7 L1606.5 804.1 L1607.2 797.7 L1607.9 801 L1608.6 875.9 L1609.3 884.6 L1610 886.4 L1610.7 876.4 L1611.4 883.7 L1612.1 878.2 L1612.8 876.8 L1613.5 879.3 L1614.2 882.7 L1614.9 886.1 L1615.6 886.5 L1616.3 886.5 L1617 882.3 L1617.7 882.6 L1618.4 794.9 L1619.1 801.3 L1619.8 799.3 L1620.5 797.1 L1621.2 803.4 L1621.9 795.9 L1622.6 794.6 L1623.3 794.8 L1624 794.7 L1624.7 799.8 L1625.4 802.2 L1626.1 794.8 L1626.8 798.8 L1627.5 881.7 L1628.2 881.5 L1628.9 879.8 L1629.6 881.4 L1630.3 875.3 L1631 875.8 L1631.7 880 L1632.4 877.8 L1633.1 883.8 L1633.8 877.9 L1634.5 884.6 L1635.2 877.9 L1635.9 876.2 L1636.6 880.6 L1637.3 879.6 L1638 879 L1638.7 883.9 L1639.4 877.7 L1640.1 882.8 L1640.8 884.7 L1641.5 880.3 L1642.2 880.9 L1642.9 885.7 L1643.6 882 L1644.3 877.2 L1645 875.9 L1645.7 876 L1646.4 878.9 L1647.1 876.1 L1647.8 882.6 L1648.5 880 L1649.2 878.6 L1649.9 881 L1650.6 885.9 L1651.3 877.9 L1652 876.9 L1652.7 878.6 L1653.4 878.8 L1654.1 885.6 L1654.8 883.2"/>
</g>
<g fill="#eaa83f">
<rect x="372.6" y="708" width="3.2" height="104"/>
<rect x="549" y="779.2" width="2.6" height="26.8"/>
<rect x="562.3" y="784.5" width="2.6" height="21.5"/>
<rect x="575.6" y="784.5" width="2.6" height="21.5"/>
<rect x="589" y="784.3" width="2.6" height="21.7"/>
<rect x="602.3" y="786.7" width="2.6" height="19.3"/>
<rect x="615.6" y="779" width="2.6" height="27"/>
<rect x="628.9" y="788" width="2.6" height="18"/>
<rect x="642.2" y="782.5" width="2.6" height="23.5"/>
<rect x="655.6" y="779.7" width="2.6" height="26.3"/>
<rect x="668.9" y="785.7" width="2.6" height="20.3"/>
<rect x="682.2" y="782.5" width="2.6" height="23.5"/>
<rect x="967.7" y="778" width="3" height="22"/>
<rect x="1168.9" y="750" width="4.2" height="56"/>
<rect x="1190.7" y="792.6" width="2.4" height="90"/>
<rect x="1203" y="795.7" width="2.4" height="86.9"/>
<rect x="1213.6" y="795.8" width="2.4" height="86.8"/>
<rect x="1236.3" y="792" width="2.4" height="90.6"/>
<rect x="1259.2" y="794.6" width="2.4" height="88"/>
<rect x="1280.9" y="794.1" width="2.4" height="88.5"/>
<rect x="1327.7" y="792" width="2.4" height="90.6"/>
<rect x="1348.7" y="794" width="2.4" height="88.6"/>
<rect x="1373.4" y="794" width="2.4" height="88.6"/>
<rect x="1396.9" y="795.2" width="2.4" height="87.4"/>
<rect x="1421.7" y="795.3" width="2.4" height="87.3"/>
<rect x="1469.5" y="793.6" width="2.4" height="89"/>
<rect x="1491.9" y="794.8" width="2.4" height="87.8"/>
<rect x="1514.7" y="793.3" width="2.4" height="89.3"/>
<rect x="1525.3" y="794.6" width="2.4" height="88"/>
<rect x="1535.9" y="791.8" width="2.4" height="90.8"/>
<rect x="1546.5" y="795.6" width="2.4" height="87"/>
<rect x="1581.6" y="794.8" width="2.4" height="87.8"/>
<rect x="1652.3" y="795.2" width="2.4" height="87.4"/>
<rect x="1279.4" y="735" width="6" height="95"/>
<rect x="1284.8" y="730" width="3.6" height="82"/>
<rect x="1286.6" y="767.6" width="2.4" height="32.9"/>
<rect x="1336.1" y="746.1" width="2.4" height="54.4"/>
<rect x="1358.6" y="752.2" width="2.4" height="48.3"/>
<rect x="1382.6" y="761.7" width="2.4" height="38.8"/>
<rect x="1404.6" y="748.7" width="2.4" height="51.8"/>
<rect x="1426.6" y="762.7" width="2.4" height="37.8"/>
<rect x="1438.2" y="762.5" width="2.4" height="38"/>
<rect x="1471.6" y="764.1" width="2.4" height="36.4"/>
<rect x="1550.2" y="751.1" width="2.4" height="49.4"/>
<rect x="1600.2" y="767.8" width="2.4" height="32.7"/>
<rect x="1617.4" y="749.1" width="2.4" height="51.4"/>
</g>
<path d="M1185.6 883.6 L1188.3 874 L1189.1 859.9 L1192.1 859.9 L1192.9 874 L1195.6 883.6Z" fill="#eaa83f"/>
<path d="M1197.9 883.6 L1200.6 874 L1201.4 858.5 L1204.4 858.5 L1205.2 874 L1207.9 883.6Z" fill="#eaa83f"/>
<path d="M1208.5 883.6 L1211.2 874 L1212 854.9 L1215 854.9 L1215.8 874 L1218.5 883.6Z" fill="#eaa83f"/>
<path d="M1220.8 883.6 L1223.5 874 L1224.3 853.7 L1227.3 853.7 L1228.1 874 L1230.8 883.6Z" fill="#eaa83f"/>
<path d="M1231.2 883.6 L1233.9 874 L1234.7 853.8 L1237.7 853.8 L1238.5 874 L1241.2 883.6Z" fill="#eaa83f"/>
<path d="M1241.7 883.6 L1244.4 874 L1245.2 859.6 L1248.2 859.6 L1249 874 L1251.7 883.6Z" fill="#eaa83f"/>
<path d="M1254.1 883.6 L1256.8 874 L1257.6 854.1 L1260.6 854.1 L1261.4 874 L1264.1 883.6Z" fill="#eaa83f"/>
<path d="M1265.2 883.6 L1267.9 874 L1268.7 855 L1271.7 855 L1272.5 874 L1275.2 883.6Z" fill="#eaa83f"/>
<path d="M1275.8 883.6 L1278.5 874 L1279.3 851 L1282.3 851 L1283.1 874 L1285.8 883.6Z" fill="#eaa83f"/>
<path d="M1322.6 883.6 L1325.3 874 L1326.1 856.6 L1329.1 856.6 L1329.9 874 L1332.6 883.6Z" fill="#eaa83f"/>
<path d="M1343.6 883.6 L1346.3 874 L1347.1 854.3 L1350.1 854.3 L1350.9 874 L1353.6 883.6Z" fill="#eaa83f"/>
<path d="M1368.3 883.6 L1371 874 L1371.8 850.2 L1374.8 850.2 L1375.6 874 L1378.3 883.6Z" fill="#eaa83f"/>
<path d="M1391.8 883.6 L1394.5 874 L1395.3 854.7 L1398.3 854.7 L1399.1 874 L1401.8 883.6Z" fill="#eaa83f"/>
<path d="M1416.6 883.6 L1419.3 874 L1420.1 858.5 L1423.1 858.5 L1423.9 874 L1426.6 883.6Z" fill="#eaa83f"/>
<path d="M1452 883.6 L1454.7 874 L1455.5 856.1 L1458.5 856.1 L1459.3 874 L1462 883.6Z" fill="#eaa83f"/>
<path d="M1464.4 883.6 L1467.1 874 L1467.9 856 L1470.9 856 L1471.7 874 L1474.4 883.6Z" fill="#eaa83f"/>
<path d="M1486.8 883.6 L1489.5 874 L1490.3 850 L1493.3 850 L1494.1 874 L1496.8 883.6Z" fill="#eaa83f"/>
<path d="M1499.1 883.6 L1501.8 874 L1502.6 859 L1505.6 859 L1506.4 874 L1509.1 883.6Z" fill="#eaa83f"/>
<path d="M1509.6 883.6 L1512.3 874 L1513.1 854.7 L1516.1 854.7 L1516.9 874 L1519.6 883.6Z" fill="#eaa83f"/>
<path d="M1520.2 883.6 L1522.9 874 L1523.7 856 L1526.7 856 L1527.5 874 L1530.2 883.6Z" fill="#eaa83f"/>
<path d="M1530.8 883.6 L1533.5 874 L1534.3 853.1 L1537.3 853.1 L1538.1 874 L1540.8 883.6Z" fill="#eaa83f"/>
<path d="M1541.4 883.6 L1544.1 874 L1544.9 854 L1547.9 854 L1548.7 874 L1551.4 883.6Z" fill="#eaa83f"/>
<path d="M1564.2 883.6 L1566.9 874 L1567.7 858 L1570.7 858 L1571.5 874 L1574.2 883.6Z" fill="#eaa83f"/>
<path d="M1576.5 883.6 L1579.2 874 L1580 854.3 L1583 854.3 L1583.8 874 L1586.5 883.6Z" fill="#eaa83f"/>
<path d="M1587.7 883.6 L1590.4 874 L1591.2 856.3 L1594.2 856.3 L1595 874 L1597.7 883.6Z" fill="#eaa83f"/>
<path d="M1634.8 883.6 L1637.5 874 L1638.3 851.5 L1641.3 851.5 L1642.1 874 L1644.8 883.6Z" fill="#eaa83f"/>
<path d="M1647.2 883.6 L1649.9 874 L1650.7 853 L1653.7 853 L1654.5 874 L1657.2 883.6Z" fill="#eaa83f"/>
<g fill="none" stroke="#eaa83f" stroke-width="3.4" stroke-linejoin="round" stroke-linecap="round">
<path d="M1169 799.5 L1169.8 800.4 L1170.6 800.8 L1171.4 800.9 L1172.2 801.2 L1173 800.3 L1173.8 799.1 L1174.6 801.2 L1175.4 799.1 L1176.2 800.4 L1177 800.2 L1177.8 801.1 L1178.6 801.2 L1179.4 799.7 L1180.2 801 L1181 801.1 L1181.8 882.5 L1182.6 881.5 L1183.4 883.9 L1184.2 882.9 L1185 881.2 L1185.8 881.8 L1186.6 884.2 L1187.4 881.7 L1188.2 882.3 L1189 883.5 L1189.8 883.6 L1190.6 883 L1191.4 883.4 L1192.2 881.1 L1193 881.3 L1193.8 884.1 L1194.6 883.6 L1195.4 881.1 L1196.2 881.2 L1197 881.8 L1197.8 884 L1198.6 881.7 L1199.4 883.2 L1200.2 884 L1201 883 L1201.8 883.9 L1202.6 881.8 L1203.4 881.5 L1204.2 881.1 L1205 883.4 L1205.8 881.3 L1206.6 884.1 L1207.4 883.3 L1208.2 881.6 L1209 883.6 L1209.8 881.5 L1210.6 882.6 L1211.4 881.3 L1212.2 883.5 L1213 883.8 L1213.8 883.9 L1214.6 881 L1215.4 883.7 L1216.2 882.8 L1217 883.6 L1217.8 882.6 L1218.6 883 L1219.4 882.9 L1220.2 883.6 L1221 881.2 L1221.8 881.2 L1222.6 882.7 L1223.4 881.9 L1224.2 882.3 L1225 881 L1225.8 883.4 L1226.6 881.1 L1227.4 883.7 L1228.2 883.6 L1229 882.5 L1229.8 881.4 L1230.6 883.1 L1231.4 881.7 L1232.2 882.4 L1233 881.4 L1233.8 884.1 L1234.6 882.7 L1235.4 882.1 L1236.2 881.3 L1237 883.3 L1237.8 883.7 L1238.6 883.7 L1239.4 881.3 L1240.2 882.2 L1241 882 L1241.8 883.4 L1242.6 881.5 L1243.4 882.9 L1244.2 884.1 L1245 883.5 L1245.8 881 L1246.6 881.2 L1247.4 881.4 L1248.2 883.2 L1249 882.9 L1249.8 882.7 L1250.6 882.5 L1251.4 882.3 L1252.2 883 L1253 883.1 L1253.8 883.9 L1254.6 883.3 L1255.4 883.5 L1256.2 883.9 L1257 883.7 L1257.8 883.3 L1258.6 881.1 L1259.4 883.2 L1260.2 883.7 L1261 882.4 L1261.8 883.8 L1262.6 881.6 L1263.4 884 L1264.2 882.4 L1265 883.3 L1265.8 881.8 L1266.6 882 L1267.4 882.1 L1268.2 882 L1269 881.3 L1269.8 882.4 L1270.6 884.1 L1271.4 883.1 L1272.2 884 L1273 883.4 L1273.8 883.7 L1274.6 884.2 L1275.4 883.4 L1276.2 881.9 L1277 881.8 L1277.8 882.3 L1278.6 881.1 L1279.4 881.7 L1280.2 883.8 L1281 883.9 L1281.8 882.1 L1282.6 883.5 L1283.4 883.5 L1284.2 883.8 L1285 883.5 L1285.8 882.7 L1286.6 881.3 L1287.4 801.5 L1288.2 799.9 L1289 800.9 L1289.8 800.1 L1290.6 800.6 L1291.4 802 L1292.2 799.4 L1293 800.6 L1293.8 801 L1294.6 800.6 L1295.4 801.9 L1296.2 800.2 L1297 801.8 L1297.8 801.1 L1298.6 802 L1299.4 799.2 L1300.2 799.6 L1301 799.8 L1301.8 801.8 L1302.6 798.9 L1303.4 799.7 L1304.2 801.2 L1305 802.1 L1305.8 799.5 L1306.6 800.3 L1307.4 801.1 L1308.2 801.1 L1309 801.3 L1309.8 801.3 L1310.6 799.7 L1311.4 799.7 L1312.2 799 L1313 801.1 L1313.8 799.6 L1314.6 799.7 L1315.4 802 L1316.2 801 L1317 800.8 L1317.8 801 L1318.6 800.8 L1319.4 801.1 L1320.2 799.9 L1321 799.1 L1321.8 799.1 L1322.6 798.9 L1323.4 800.1 L1324.2 881.5 L1325 881.4 L1325.8 882.6 L1326.6 884.1 L1327.4 883.2 L1328.2 881.9 L1329 883.5 L1329.8 881.6 L1330.6 881.3 L1331.4 882 L1332.2 882.3 L1333 883.2 L1333.8 882.4 L1334.6 883.3 L1335.4 881.3 L1336.2 884 L1337 800 L1337.8 801.6 L1338.6 799 L1339.4 801.6 L1340.2 799.6 L1341 801.6 L1341.8 801.5 L1342.6 883.1 L1343.4 881.9 L1344.2 881 L1345 881.6 L1345.8 883.9 L1346.6 881.5 L1347.4 883.1 L1348.2 882.9 L1349 883.1 L1349.8 881.6 L1350.6 881.5 L1351.4 881.3 L1352.2 884.1 L1353 882.2 L1353.8 883.1 L1354.6 882.8 L1355.4 881.7 L1356.2 881.2 L1357 881 L1357.8 883.7 L1358.6 881.4 L1359.4 802 L1360.2 800.1 L1361 801.2 L1361.8 799.3 L1362.6 801.4 L1363.4 799.7 L1364.2 800.1 L1365 800.6 L1365.8 799.3 L1366.6 881.8 L1367.4 883.5 L1368.2 881.9 L1369 882.2 L1369.8 883.4 L1370.6 881.7 L1371.4 881.6 L1372.2 881.7 L1373 882.2 L1373.8 882.2 L1374.6 883.1 L1375.4 882.5 L1376.2 883.8 L1377 881.2 L1377.8 883.1 L1378.6 883.7 L1379.4 881.8 L1380.2 881.1 L1381 882.4 L1381.8 881.4 L1382.6 882.5 L1383.4 801.2 L1384.2 799.2 L1385 799.3 L1385.8 800.4 L1386.6 799.5 L1387.4 799.6 L1388.2 800.3 L1389 799.3 L1389.8 881.2 L1390.6 882.2 L1391.4 882.5 L1392.2 884 L1393 882.8 L1393.8 881.2 L1394.6 881.7 L1395.4 883.4 L1396.2 882.8 L1397 883.8 L1397.8 884.1 L1398.6 883.7 L1399.4 881.4 L1400.2 884 L1401 882.7 L1401.8 881.8 L1402.6 881.5 L1403.4 883.8 L1404.2 881.7 L1405 881.3 L1405.8 799.7 L1406.6 801.9 L1407.4 800.4 L1408.2 801.2 L1409 799.1 L1409.8 800.3 L1410.6 799.9 L1411.4 881.7 L1412.2 883.1 L1413 882.2 L1413.8 881.4 L1414.6 884.1 L1415.4 882.5 L1416.2 881.6 L1417 881 L1417.8 883.1 L1418.6 882.6 L1419.4 881.1 L1420.2 882.5 L1421 883.4 L1421.8 882.7 L1422.6 881.7 L1423.4 882.6 L1424.2 882.9 L1425 883.1 L1425.8 881.5 L1426.6 883.6 L1427.4 801.9 L1428.2 801.3 L1429 801.6 L1429.8 800.1 L1430.6 801.8 L1431.4 799.5 L1432.2 799.6 L1433 882.9 L1433.8 883.9 L1434.6 881.3 L1435.4 881.7 L1436.2 881.1 L1437 882.4 L1437.8 881.4 L1438.6 881.6 L1439.4 801.3 L1440.2 800.8 L1441 801.9 L1441.8 800.2 L1442.6 801.1 L1443.4 798.9 L1444.2 801.9 L1445 881.7 L1445.8 882.5 L1446.6 882.6 L1447.4 884 L1448.2 882.6 L1449 884.2 L1449.8 883 L1450.6 881.7 L1451.4 883.7 L1452.2 881.6 L1453 884.2 L1453.8 882.5 L1454.6 881.7 L1455.4 884.1 L1456.2 882 L1457 882.3 L1457.8 882.1 L1458.6 883.1 L1459.4 881.1 L1460.2 882.2 L1461 881.5 L1461.8 883.6 L1462.6 881 L1463.4 882.9 L1464.2 881.8 L1465 882.5 L1465.8 882.8 L1466.6 883.3 L1467.4 881.4 L1468.2 881.8 L1469 881.4 L1469.8 884.1 L1470.6 881.5 L1471.4 881.4 L1472.2 800.6 L1473 800.8 L1473.8 801.7 L1474.6 799.1 L1475.4 799.6 L1476.2 799.4 L1477 800.8 L1477.8 800.3 L1478.6 800.2 L1479.4 801.7 L1480.2 801 L1481 801.7 L1481.8 802 L1482.6 799.8 L1483.4 801.9 L1484.2 882.3 L1485 881.2 L1485.8 883.9 L1486.6 881.3 L1487.4 881.1 L1488.2 881.9 L1489 881.9 L1489.8 884.1 L1490.6 883.8 L1491.4 882.3 L1492.2 882.7 L1493 883.7 L1493.8 883.6 L1494.6 883.1 L1495.4 882.6 L1496.2 881.4 L1497 881.8 L1497.8 883.1 L1498.6 882.9 L1499.4 883.6 L1500.2 883.9 L1501 884.1 L1501.8 881.6 L1502.6 881.2 L1503.4 883.9 L1504.2 882.8 L1505 881.6 L1505.8 883.2 L1506.6 881.8 L1507.4 881.8 L1508.2 882.2 L1509 882.7 L1509.8 883.2 L1510.6 881.2 L1511.4 883.4 L1512.2 883 L1513 882.5 L1513.8 883.2 L1514.6 883.6 L1515.4 881 L1516.2 882.5 L1517 883.2 L1517.8 883.3 L1518.6 883.1 L1519.4 881.6 L1520.2 884.1 L1521 883.5 L1521.8 881.7 L1522.6 882.4 L1523.4 884.1 L1524.2 881.7 L1525 882.3 L1525.8 884.1 L1526.6 883.9 L1527.4 881.7 L1528.2 883.4 L1529 882.2 L1529.8 883.1 L1530.6 883.5 L1531.4 881.4 L1532.2 881.7 L1533 881.7 L1533.8 881.9 L1534.6 881.1 L1535.4 881.4 L1536.2 882.3 L1537 882.3 L1537.8 881.2 L1538.6 882.9 L1539.4 884 L1540.2 882.8 L1541 882.1 L1541.8 883.3 L1542.6 882.4 L1543.4 881.6 L1544.2 882.5 L1545 881.1 L1545.8 883.2 L1546.6 881.5 L1547.4 882.2 L1548.2 884.1 L1549 883.5 L1549.8 883.7 L1550.6 883.1 L1551.4 800.9 L1552.2 801.2 L1553 802 L1553.8 799.5 L1554.6 801.4 L1555.4 799.9 L1556.2 799.7 L1557 801.5 L1557.8 800.8 L1558.6 883.7 L1559.4 883.8 L1560.2 882.9 L1561 881.6 L1561.8 881 L1562.6 882.7 L1563.4 883.3 L1564.2 881.9 L1565 881.2 L1565.8 881 L1566.6 881.6 L1567.4 883.2 L1568.2 881 L1569 881.7 L1569.8 881.8 L1570.6 883.3 L1571.4 884.2 L1572.2 881.1 L1573 881.4 L1573.8 884 L1574.6 884.1 L1575.4 881.5 L1576.2 882.1 L1577 882.7 L1577.8 882 L1578.6 882.3 L1579.4 882.5 L1580.2 881.8 L1581 881.2 L1581.8 881.3 L1582.6 881.5 L1583.4 881.3 L1584.2 883 L1585 883.2 L1585.8 881.8 L1586.6 883.5 L1587.4 883.3 L1588.2 882.1 L1589 882.6 L1589.8 881.6 L1590.6 884 L1591.4 882.8 L1592.2 881.2 L1593 881.5 L1593.8 883.2 L1594.6 882.2 L1595.4 883.3 L1596.2 881.7 L1597 883.6 L1597.8 883.6 L1598.6 881.3 L1599.4 882.9 L1600.2 881.6 L1601 801.2 L1601.8 801.5 L1602.6 801.4 L1603.4 799.6 L1604.2 799.2 L1605 801 L1605.8 800.7 L1606.6 799.3 L1607.4 799.5 L1608.2 800.8 L1609 881.3 L1609.8 883 L1610.6 881.8 L1611.4 881.8 L1612.2 882.4 L1613 882.7 L1613.8 883.3 L1614.6 881.1 L1615.4 883.3 L1616.2 881.7 L1617 881.9 L1617.8 883 L1618.6 801.1 L1619.4 800.9 L1620.2 801.8 L1621 799.6 L1621.8 799.9 L1622.6 801 L1623.4 799.7 L1624.2 799.4 L1625 799.6 L1625.8 801.4 L1626.6 801.5 L1627.4 883.3 L1628.2 884.1 L1629 883.5 L1629.8 882 L1630.6 882 L1631.4 883.3 L1632.2 881.2 L1633 882.9 L1633.8 881.3 L1634.6 881.2 L1635.4 882.6 L1636.2 881.5 L1637 884 L1637.8 883.8 L1638.6 882.5 L1639.4 881.6 L1640.2 881.4 L1641 882.6 L1641.8 882.7 L1642.6 882.2 L1643.4 883.3 L1644.2 882.7 L1645 883.5 L1645.8 881.3 L1646.6 881.2 L1647.4 882.2 L1648.2 882.5 L1649 881.8 L1649.8 883.1 L1650.6 881.7 L1651.4 882 L1652.2 882.5 L1653 883.3 L1653.8 883.5 L1654.6 882.2 L1655 882.6 L1655.6 803.5"/>
<path d="M1322.5 800.5 L1326.5 876.6 L1327.4 882.6"/>
<path d="M1340.5 800.5 L1344.5 876.6 L1345.4 882.6"/>
<path d="M1364.5 800.5 L1368.5 876.6 L1369.4 882.6"/>
<path d="M1387.5 800.5 L1391.5 876.6 L1392.4 882.6"/>
<path d="M1409.5 800.5 L1413.5 876.6 L1414.4 882.6"/>
<path d="M1430.9 800.5 L1434.9 876.6 L1435.8 882.6"/>
<path d="M1442.9 800.5 L1446.9 876.6 L1447.8 882.6"/>
<path d="M1482 800.5 L1486 876.6 L1486.9 882.6"/>
<path d="M1556.3 800.5 L1560.3 876.6 L1561.2 882.6"/>
<path d="M1606.9 800.5 L1610.9 876.6 L1611.8 882.6"/>
<path d="M1625.5 800.5 L1629.5 876.6 L1630.4 882.6"/>
</g>
<g fill="none" stroke="#eaa83f" stroke-width="6" stroke-linejoin="round" stroke-linecap="butt">
<path d="M110.6 864 L127.6 864 L128.4 869 L143.4 869.4 L150 870.5 L155.6 878 L156.6 906.5"/>
<path d="M321 866.2 L346.8 866.8 L356 875 L370.2 875.6"/>
</g>
<g fill="none" stroke="#eaa83f" stroke-width="3.6" stroke-linejoin="round" stroke-linecap="round">
<path d="M51 915.5 L105.2 915.5 L106.2 905 L108.6 870 L110.6 864"/>
<path d="M156.6 906.5 L158.6 906.1 L160.6 906 L162.6 906.1 L164.6 905.9 L166.6 906.5 L168.6 906.7 L170.6 906.8 L172.6 906.9 L174.6 907.1 L176.6 907 L178.6 906.4 L180.6 906.8 L182.6 907.1 L184.6 907 L186.6 907 L188.6 907.1 L190.6 906.6 L192.6 906.9 L194.6 906.6 L196.6 906.2 L198.6 906.2 L200.6 906.6 L202.6 906.4 L204.6 906.7 L206.6 907.2 L208.6 907.1 L210.6 906.9 L212.6 906.8 L214.6 907 L216.6 907.2 L218.6 907.2 L220.6 907.2 L222.6 906.7 L224.6 906.4 L226.6 906.2 L228.6 906.7 L230.6 906.5 L232.6 906.7 L234.6 906.2 L236.6 906 L238.6 906 L240.6 906.4 L242.6 906.7 L244.6 906.9 L246.6 906.7 L248.6 906.7 L250.6 906.7 L252.6 906.7 L254.6 906.4 L256.6 906.9 L258.6 906.6 L260.6 907.1 L262.6 907.5 L264.6 906.8 L266.6 906.7 L268.6 907.1 L270.6 907.5 L272.6 907.2 L274.6 906.9 L276.6 906.6 L278.6 907.1 L280.6 906.7 L282.6 906.8 L284 906.8"/>
<path d="M284 906.6 L285 893 L288 891 L289.4 899 L291.6 893 L293.6 905 L300 906.6 L315.2 908"/>
<path d="M315.2 908 L316.6 900 L319.6 868 L321 866.2"/>
<path d="M370.2 875.6 L371.2 850 L373 812 L376 806 L379 803.5"/>
<path d="M379 804.6 L381 803.4 L383 802.7 L385 803.3 L387 803 L389 802.7 L391 803 L393 802.7 L395 803.1 L397 803.3 L399 804.3 L401 805.1 L403 803.7 L405 803.8 L407 804.3 L409 804.8 L411 805 L413 804.8 L415 804.7 L417 804.1 L419 803.5 L421 804.1 L423 804.7 L425 805.3 L427 805.1 L429 804.3 L431 804.6 L433 804.8 L435 804.4 L437 804.5 L439 803.9 L441 803.9 L443 803.6 L445 802.7 L447 802.7 L449 802.6 L451 803.9 L453 803.8 L455 803.4 L457 803 L459 802.6 L461 802.6 L463 802.2 L465 801.6 L467 803 L469 803.1 L471 803.1 L473 803.4 L475 803.1 L477 802.6 L479 802 L481 802.1 L483 802.2 L485 803 L487 803.3 L489 804.3 L491 803.8 L493 804.5 L495 804.4 L497 803.3 L499 802.8 L501 803.2 L503 804.3 L505 803.8 L507 804.3 L509 803.9 L511 804.6 L513 803.4 L515 803.4 L517 804.3 L519 803.6 L521 803.1 L523 802.3 L525 802 L527 802 L529 802.9 L531 802.6 L533 802.7 L535 802.3 L537 802.9 L539 803.9 L541 804.1 L543 803.3 L545 803.9 L547 804.7 L549 804.6 L551 803.4 L553 804.1 L555 804.7 L557 804.1 L559 803.2 L561 802.7 L563 803 L565 804 L567 804.1 L569 804.8 L571 803.9 L573 803.4 L575 804 L577 804.2 L579 803.8 L581 804.1 L583 803.6 L585 802.7 L587 802.8 L589 802.1 L591 802.8 L593 802.7 L595 803 L597 803.4 L599 802.9 L601 803.1 L603 802.3 L605 803.5 L607 803.7 L609 804.6 L611 803.4 L613 803.7 L615 804.1 L617 803.6 L619 802.8 L621 802.4 L623 802 L625 803 L627 802.4 L629 803.4 L631 803.3 L633 803.5 L635 803.7 L637 803.8 L639 804 L641 804.1 L643 803.6 L645 804.1 L647 803.5 L649 803.9 L651 804.4 L653 804.7 L655 804 L657 804.4 L659 805.1 L661 804.6 L663 803.8 L665 803.8 L667 804.6 L669 803.6 L671 802.6 L673 802.9 L675 803.4 L677 804 L679 803.6 L681 804.6 L683 803.7 L685 804.2 L687 803.2 L689 802.4 L691 802 L693 801.6 L695 802.2 L697 802.7 L699 802.4 L701 803.6 L703 803.3 L705 802.7 L707 802.3 L709 803.2 L711 804.2 L713 803.3 L715 802.5 L717 803.4 L719 802.9 L721 804.1 L723 803.9 L725 804.1 L727 803.6 L729 804.2 L731 804 L733 803.5 L735 804.3 L737 803.3 L739 803.9 L741 802.9 L743 803.4 L745 803.3 L747 804.1 L749 803.1 L751 803.4 L753 803.3 L755 804.2 L757 804.9 L759 804.8 L761 803.9 L763 803.3 L765 802.9 L767 803 L769 802.6 L771 802.3 L773 803.2 L775 803.6 L777 803.2 L779 804.3 L781 803.5 L783 803.7 L785 803 L787 803.9 L789 804.5 L791 803.8 L793 804.2 L795 804.7 L797 803.9 L799 803.5 L801 803.5 L803 804.3 L805 803.4 L807 803.8 L809 804 L811 803.8 L813 803.9 L815 804.6 L817 803.7 L819 804.4 L821 803.9 L823 804.4 L825 804.9 L827 803.9 L829 804.5 L831 805.2 L833 804.3 L835 803.2 L837 802.5 L839 803.8 L841 802.8 L843 803.8 L845 803.1 L847 803.7 L849 802.9 L851 802.4 L853 803.1 L855 802.5 L857 802.5 L859 803.7 L861 804.1 L863 804.7 L865 805.3 L867 803.9 L869 803.3 L871 803.9 L873 804.2 L875 803.1 L877 803.3 L879 802.8 L881 802.9 L883 802.3 L885 801.8 L887 803.3 L889 803 L891 803.9 L893 803.1 L895 803.2 L897 802.6 L899 802.8 L901 802.4 L903 803.1 L905 802.6 L907 803.3 L909 803.4 L911 802.7 L913 802.7 L915 802.9 L917 804 L919 803.6 L921 803 L923 804.1 L925 804.7 L927 804.9 L929 804 L931 803.3 L933 802.9 L935 802.2 L937 801.7 L939 802.3 L941 802.5 L943 803 L945 802.9 L947 802.1 L949 802.9 L951 803.4 L953 803.6 L955 803.7 L957 804 L959 804.9 L961 805.2 L963 805.2 L965 804.5 L967 803.9 L969 803.6 L969 803.6"/>
<path d="M969 799.2 L971 799.5 L973 800 L975 799.1 L977 799.8 L979 798.5 L981 798.4 L983 797.6 L985 797.7 L987 798.2 L989 798.6 L991 798.4 L993 798 L995 797.5 L997 797.5 L999 797.3 L1001 796.9 L1003 797.8 L1005 797.9 L1007 797.9 L1009 797.4 L1011 798 L1013 797.5 L1015 797.2 L1017 797.6 L1019 798.2 L1021 799.2 L1023 799.4 L1025 799.9 L1027 800.2 L1029 800.1 L1031 799.9 L1033 798.5 L1035 797.9 L1037 797 L1039 798.1 L1041 798.6 L1043 798.7 L1045 798.1 L1047 797.8 L1049 797.3 L1051 797.8 L1053 798.9 L1055 798.3 L1057 797.4 L1059 797 L1061 797 L1063 798.2 L1065 798.8 L1067 798.5 L1069 797.6 L1071 797 L1073 796.7 L1075 797.7 L1077 797.8 L1079 798.9 L1081 799.5 L1083 799.7 L1085 799.2 L1087 799.5 L1089 798.4 L1091 797.6 L1093 797.9 L1095 798 L1097 797.5 L1099 797.2 L1101 796.5 L1103 797.9 L1105 798.4 L1107 799.2 L1109 799.9 L1111 799.2 L1113 799.4 L1115 798.8 L1117 799.2 L1119 799.6 L1121 798.5 L1123 797.4 L1125 797.1 L1127 797.6 L1129 797.5 L1131 796.7 L1133 797.8 L1135 798.5 L1137 798.4 L1139 797.4 L1141 798.4 L1143 798.4 L1145 797.5 L1147 797.4 L1149 797.9 L1151 798.7 L1153 798.5 L1155 798.7 L1157 798 L1159 797.5 L1161 798.5 L1163 798.2 L1165 797.4 L1167 797.8 L1169 797.2 L1169 798.2"/>
<path d="M1655.6 803.6 L1657.6 802.8 L1659.6 802.8 L1661.6 803.3 L1663.6 802.6 L1665.6 802.4 L1667.6 802.9 L1669.6 803.2 L1671.6 802.7 L1673.6 802.5 L1675.6 802.5 L1677.6 803.1 L1679.6 803.2 L1681.6 803 L1683.6 802.5 L1685.6 802.9 L1687.6 802.5 L1689.6 802.1 L1691.6 801.7 L1693.6 802.5 L1695.6 802.2 L1697.6 801.8 L1699.6 802.8 L1701.6 803.8 L1703.6 804.2 L1705.6 804.9 L1707.6 805.4 L1709.6 804.4 L1711.6 804.5 L1713.6 804.2 L1715.6 804.7 L1717.6 805.2 L1719.6 805.6 L1721.6 804.9 L1723.6 803.8 L1725.6 803.2 L1727.6 804 L1729.6 804.5 L1731.6 804 L1733.6 803.7 L1735.6 804.3 L1737.6 804.6 L1739.6 804.9 L1741.6 805.4 L1743.6 805.9 L1745.6 805.1 L1747.6 804.1 L1749.6 804.5 L1751.6 804.2 L1753.6 804.2 L1755.6 804.7 L1757.6 805.3 L1759.6 805.4 L1761.6 804.2 L1763.6 804.4 L1765.6 803.3 L1767.6 803.2 L1769.6 803.4 L1771.6 804 L1773.6 804.9 L1775.6 804.8 L1777.6 804.3 L1779.6 803.6 L1781.6 804.5 L1783.6 803.4 L1785.6 803.8 L1787.6 804.5 L1789.6 804.7 L1791.6 804.5 L1793.6 805.2 L1795 803.8"/>
<path d="M1794.6 803.8 L1796 860 L1797.2 911 L1800 910.5 L1802 912.4 L1806 912.8 L2546 912.8"/>
</g>
</svg>
<span class="t s" style="left:223.60px;top:177.62px;font-size:22.9px;color:#cdcdcd;font-weight:bold;letter-spacing:-0.195px;">2 s</span>
<span class="t s" style="left:442.77px;top:177.62px;font-size:22.9px;color:#cdcdcd;font-weight:bold;letter-spacing:-0.195px;">4 s</span>
<span class="t s" style="left:661.94px;top:177.62px;font-size:22.9px;color:#cdcdcd;font-weight:bold;letter-spacing:-0.195px;">6 s</span>
<span class="t s" style="left:881.11px;top:177.62px;font-size:22.9px;color:#cdcdcd;font-weight:bold;letter-spacing:-0.195px;">8 s</span>
<span class="t s" style="left:1099.28px;top:177.62px;font-size:22.9px;color:#cdcdcd;font-weight:bold;letter-spacing:-0.074px;">10 s</span>
<span class="t s" style="left:1318.45px;top:177.62px;font-size:22.9px;color:#cdcdcd;font-weight:bold;letter-spacing:-0.074px;">12 s</span>
<span class="t s" style="left:1537.62px;top:177.62px;font-size:22.9px;color:#cdcdcd;font-weight:bold;letter-spacing:-0.074px;">14 s</span>
<span class="t s" style="left:1756.79px;top:177.62px;font-size:22.9px;color:#cdcdcd;font-weight:bold;letter-spacing:-0.074px;">16 s</span>
<span class="t s" style="left:1975.96px;top:177.62px;font-size:22.9px;color:#cdcdcd;font-weight:bold;letter-spacing:-0.074px;">18 s</span>
<span class="t s" style="left:2196.13px;top:177.62px;font-size:22.9px;color:#cdcdcd;font-weight:bold;letter-spacing:-0.407px;">20 s</span>
<span class="t s" style="left:2415.30px;top:177.62px;font-size:22.9px;color:#cdcdcd;font-weight:bold;letter-spacing:-0.407px;">22 s</span>
<span class="t s" style="left:40.8px;top:364.70px;font-size:20.5px;font-weight:bold;color:#bdbdbd;transform-origin:0 0;transform:rotate(-90deg) translateY(-84.65%);">400 mA</span>
<span class="t s" style="left:40.8px;top:635.60px;font-size:20.5px;font-weight:bold;color:#bdbdbd;transform-origin:0 0;transform:rotate(-90deg) translateY(-84.65%);">200 mA</span>
<span class="t s" style="left:40.8px;top:906.50px;font-size:20.5px;font-weight:bold;color:#bdbdbd;transform-origin:0 0;transform:rotate(-90deg) translateY(-84.65%);">0.0 A</span>
<div class="b" style="left:59.60px;top:219.40px;width:261.60px;height:51.20px;background:rgba(114,114,114,0.95);"></div>
<span class="t s" style="left:72.70px;top:232.60px;font-size:28px;color:#fff;letter-spacing:0.290px;">Main current - Ace</span>
<div class="b" style="left:1966.20px;top:219.40px;width:570.60px;height:121.00px;background:rgba(112,112,112,0.93);"></div>
<svg width="2560" height="400" viewBox="0 0 2560 400"><path d="M1990 242.4 H2003.2 L1996.6 249.4 Z" fill="#fff"/><rect x="1988.8" y="277" width="15.2" height="14.8" fill="#f2ad3e"/></svg>
<span class="t s" style="left:2024.00px;top:231.57px;font-size:22.6px;color:#f4f4f4;font-weight:bold;letter-spacing:1.701px;-webkit-text-stroke:0.3px #f4f4f4;">MIN</span>
<span class="t s" style="left:2152.50px;top:231.57px;font-size:22.6px;color:#f4f4f4;font-weight:bold;letter-spacing:-1.054px;-webkit-text-stroke:0.3px #f4f4f4;">AVG</span>
<span class="t s" style="left:2279.80px;top:231.57px;font-size:22.6px;color:#f4f4f4;font-weight:bold;letter-spacing:1.081px;-webkit-text-stroke:0.3px #f4f4f4;">MAX</span>
<span class="t s" style="left:2407.50px;top:231.57px;font-size:22.6px;color:#f4f4f4;font-weight:bold;letter-spacing:-0.769px;-webkit-text-stroke:0.3px #f4f4f4;">ENERGY</span>
<span class="t s" style="left:2024.00px;top:272.71px;font-size:23.5px;color:#f0f0f0;letter-spacing:0.947px;">-2.43 mA</span>
<span class="t s" style="left:2153.30px;top:272.71px;font-size:23.5px;color:#f0f0f0;letter-spacing:0.676px;">36.6 mA</span>
<span class="t s" style="left:2280.80px;top:272.71px;font-size:23.5px;color:#f0f0f0;letter-spacing:0.917px;">451 mA</span>
<span class="t s" style="left:2409.40px;top:272.71px;font-size:23.5px;color:#f0f0f0;letter-spacing:0.645px;">36.2 µWh</span>
<span class="t s" style="left:2175.80px;top:314.07px;font-size:22.6px;color:#b2b2b2;font-weight:bold;letter-spacing:2.703px;">SELECTION</span>
<div class="b" style="left:16.00px;top:968.20px;width:2530.00px;height:3.20px;background:#313131;"></div>
<div class="b" style="left:16.00px;top:970.20px;width:2530.00px;height:124.00px;background:#1f1f1f;"></div>
<div class="b" style="left:62.30px;top:982.20px;width:218.00px;height:49.80px;background:#70b5a9;"></div>
<span class="t s" style="left:76.10px;top:993.70px;font-size:28px;color:#101010;letter-spacing:-0.348px;">UART log - Ace</span>
<div class="b" style="left:332.50px;top:986.50px;width:344.50px;height:41.50px;background:#1b1b1b;border:2px solid #5a5a5a;box-sizing:border-box;"></div>
<span class="t s" style="left:340.60px;top:993.30px;font-size:28px;color:#7c7c7c;letter-spacing:1.441px;">Filter</span>
<div class="b" style="left:695.00px;top:986.50px;width:345.00px;height:41.50px;background:#1b1b1b;border:2px solid #5a5a5a;box-sizing:border-box;"></div>
<span class="t s" style="left:705.30px;top:993.30px;font-size:28px;color:#7c7c7c;letter-spacing:0.036px;">TX data</span>
<svg width="2560" height="1100" viewBox="0 0 2560 1100">
<rect x="1075" y="994" width="24.4" height="23" rx="3.5" fill="#f2af40"/>
<path d="M1080 1004.6 L1086.2 1011.2 L1095 999.6" fill="none" stroke="#3a2c12" stroke-width="3.9"/>
<rect x="1280.4" y="987.4" width="36" height="36.4" rx="6" fill="#f2af40" stroke="#fbe6bd" stroke-width="1.8"/>
<rect x="1286.4" y="993.6" width="24.4" height="24" rx="2.5" fill="#f2af40" stroke="#3a2c12" stroke-width="2.4"/>
<path d="M1291.4 1005 L1297.4 1011.4 L1306.2 999.8" fill="none" stroke="#3a2c12" stroke-width="3.9"/>
</svg>
<span class="t s" style="left:1114.90px;top:992.90px;font-size:28px;color:#f4f4f4;letter-spacing:0.757px;">Show time</span>
<span class="t s" style="left:1325.50px;top:992.90px;font-size:28px;color:#f4f4f4;letter-spacing:0.796px;">Show wall time</span>
<span class="t s" style="left:24.90px;top:1051.99px;font-size:26px;color:#f0f0f0;letter-spacing:-0.513px;">Time (s)</span>
<span class="t s" style="left:200.30px;top:1051.99px;font-size:26px;color:#f0f0f0;letter-spacing:0.466px;">Wall time</span>
<span class="t s" style="left:636.70px;top:1051.99px;font-size:26px;color:#f0f0f0;letter-spacing:0.066px;">Log message</span>
<div class="b" style="left:16.00px;top:1094.20px;width:2512.60px;height:635.40px;background:#000;"></div>
<div class="b" style="left:16.00px;top:1094.20px;width:2512.60px;height:105.50px;background:#555;"></div>
<div class="b" style="left:2528.60px;top:1094.20px;width:17.40px;height:635.40px;background:#333;"></div>
<div class="b" style="left:2530.20px;top:1166.40px;width:14.00px;height:162.40px;background:#828282;border-radius:7px;"></div>
<span class="t m" style="left:25.00px;top:1101.88px;font-size:25.2px;color:#f2f2f2;-webkit-text-stroke:0.45px #f2f2f2;">14.441</span>
<span class="t m" style="left:200.20px;top:1101.88px;font-size:25.2px;color:#f2f2f2;-webkit-text-stroke:0.45px #f2f2f2;">2023-10-04 11:18:15.481</span>
<span class="t m" style="left:639.60px;top:1101.88px;font-size:25.2px;color:#f2f2f2;-webkit-text-stroke:0.45px #f2f2f2;">Temperature: nan °C</span>
<span class="t m" style="left:25.00px;top:1136.95px;font-size:25.2px;color:#f2f2f2;-webkit-text-stroke:0.45px #f2f2f2;">14.713</span>
<span class="t m" style="left:200.20px;top:1136.95px;font-size:25.2px;color:#f2f2f2;-webkit-text-stroke:0.45px #f2f2f2;">2023-10-04 11:18:15.753</span>
<span class="t m" style="left:637.60px;top:1136.95px;font-size:25.2px;color:#f2f2f2;-webkit-text-stroke:0.45px #f2f2f2;">Humidity: 0 %</span>
<span class="t m" style="left:25.00px;top:1172.02px;font-size:25.2px;color:#f2f2f2;-webkit-text-stroke:0.45px #f2f2f2;">14.714</span>
<span class="t m" style="left:200.20px;top:1172.02px;font-size:25.2px;color:#f2f2f2;-webkit-text-stroke:0.45px #f2f2f2;">2023-10-04 11:18:15.754</span>
<span class="t m" style="left:637.60px;top:1172.02px;font-size:25.2px;color:#f2f2f2;-webkit-text-stroke:0.45px #f2f2f2;">Publishing to the cloud</span>
<span class="t m" style="left:25.00px;top:1207.09px;font-size:25.2px;color:#f2f2f2;-webkit-text-stroke:0.45px #f2f2f2;">14.963</span>
<span class="t m" style="left:200.20px;top:1207.09px;font-size:25.2px;color:#f2f2f2;-webkit-text-stroke:0.45px #f2f2f2;">2023-10-04 11:18:16.003</span>
<span class="t m" style="left:637.60px;top:1207.09px;font-size:25.2px;color:#f2f2f2;-webkit-text-stroke:0.45px #f2f2f2;">Disconnecting...</span>
<span class="t m" style="left:25.00px;top:1242.16px;font-size:25.2px;color:#f2f2f2;-webkit-text-stroke:0.45px #f2f2f2;">14.965</span>
<span class="t m" style="left:200.20px;top:1242.16px;font-size:25.2px;color:#f2f2f2;-webkit-text-stroke:0.45px #f2f2f2;">2023-10-04 11:18:16.005</span>
<span class="t m" style="left:637.60px;top:1242.16px;font-size:25.2px;color:#f2f2f2;-webkit-text-stroke:0.45px #f2f2f2;">Disconnected</span>
<span class="t m" style="left:25.00px;top:1277.23px;font-size:25.2px;color:#f2f2f2;-webkit-text-stroke:0.45px #f2f2f2;">15.217</span>
<span class="t m" style="left:200.20px;top:1277.23px;font-size:25.2px;color:#f2f2f2;-webkit-text-stroke:0.45px #f2f2f2;">2023-10-04 11:18:16.257</span>
<span class="t m" style="left:639.60px;top:1277.23px;font-size:25.2px;color:#f2f2f2;-webkit-text-stroke:0.45px #f2f2f2;">Turning off wifi...</span>
<span class="t m" style="left:25.00px;top:1312.30px;font-size:25.2px;color:#f2f2f2;-webkit-text-stroke:0.45px #f2f2f2;">15.472</span>
<span class="t m" style="left:200.20px;top:1312.30px;font-size:25.2px;color:#f2f2f2;-webkit-text-stroke:0.45px #f2f2f2;">2023-10-04 11:18:16.512</span>
<span class="t m" style="left:637.60px;top:1312.30px;font-size:25.2px;color:#f2f2f2;-webkit-text-stroke:0.45px #f2f2f2;">Entering sleep mode</span>
<span class="t m" style="left:25.00px;top:1347.37px;font-size:25.2px;color:#f2f2f2;-webkit-text-stroke:0.45px #f2f2f2;">36.700</span>
<span class="t m" style="left:200.20px;top:1347.37px;font-size:25.2px;color:#f2f2f2;-webkit-text-stroke:0.45px #f2f2f2;">2023-10-04 11:18:37.740</span>
<span class="t m" style="left:639.60px;top:1347.37px;font-size:25.2px;color:#f2f2f2;-webkit-text-stroke:0.45px #f2f2f2;">Waking up</span>
<span class="t m" style="left:25.00px;top:1382.44px;font-size:25.2px;color:#f2f2f2;-webkit-text-stroke:0.45px #f2f2f2;">36.701</span>
<span class="t m" style="left:200.20px;top:1382.44px;font-size:25.2px;color:#f2f2f2;-webkit-text-stroke:0.45px #f2f2f2;">2023-10-04 11:18:37.741</span>
<span class="t m" style="left:639.60px;top:1382.44px;font-size:25.2px;color:#f2f2f2;-webkit-text-stroke:0.45px #f2f2f2;">Version 1.01</span>
<span class="t m" style="left:25.00px;top:1417.51px;font-size:25.2px;color:#f2f2f2;-webkit-text-stroke:0.45px #f2f2f2;">36.703</span>
<span class="t m" style="left:200.20px;top:1417.51px;font-size:25.2px;color:#f2f2f2;-webkit-text-stroke:0.45px #f2f2f2;">2023-10-04 11:18:37.743</span>
<span class="t m" style="left:638.60px;top:1417.51px;font-size:25.2px;color:#f2f2f2;-webkit-text-stroke:0.45px #f2f2f2;">Connecting...</span>
<span class="t m" style="left:25.00px;top:1452.58px;font-size:25.2px;color:#f2f2f2;-webkit-text-stroke:0.45px #f2f2f2;">46.115</span>
<span class="t m" style="left:200.20px;top:1452.58px;font-size:25.2px;color:#f2f2f2;-webkit-text-stroke:0.45px #f2f2f2;">2023-10-04 11:18:47.155</span>
<span class="t m" style="left:638.60px;top:1452.58px;font-size:25.2px;color:#f2f2f2;-webkit-text-stroke:0.45px #f2f2f2;">Connected</span>
<span class="t m" style="left:25.00px;top:1487.65px;font-size:25.2px;color:#f2f2f2;-webkit-text-stroke:0.45px #f2f2f2;">46.116</span>
<span class="t m" style="left:200.20px;top:1487.65px;font-size:25.2px;color:#f2f2f2;-webkit-text-stroke:0.45px #f2f2f2;">2023-10-04 11:18:47.156</span>
<span class="t m" style="left:639.60px;top:1487.65px;font-size:25.2px;color:#f2f2f2;-webkit-text-stroke:0.45px #f2f2f2;">Available: 0bytes</span>
<span class="t m" style="left:25.00px;top:1522.72px;font-size:25.2px;color:#f2f2f2;-webkit-text-stroke:0.45px #f2f2f2;">46.120</span>
<span class="t m" style="left:200.20px;top:1522.72px;font-size:25.2px;color:#f2f2f2;-webkit-text-stroke:0.45px #f2f2f2;">2023-10-04 11:18:47.160</span>
<span class="t m" style="left:639.60px;top:1522.72px;font-size:25.2px;color:#f2f2f2;-webkit-text-stroke:0.45px #f2f2f2;">WiFi signal strength: 100.00%</span>
<span class="t m" style="left:25.00px;top:1557.79px;font-size:25.2px;color:#f2f2f2;-webkit-text-stroke:0.45px #f2f2f2;">46.125</span>
<span class="t m" style="left:200.20px;top:1557.79px;font-size:25.2px;color:#f2f2f2;-webkit-text-stroke:0.45px #f2f2f2;">2023-10-04 11:18:47.165</span>
<span class="t m" style="left:637.60px;top:1557.79px;font-size:25.2px;color:#f2f2f2;-webkit-text-stroke:0.45px #f2f2f2;">IP address: 192.168.156.181</span>
<span class="t m" style="left:25.00px;top:1592.86px;font-size:25.2px;color:#f2f2f2;-webkit-text-stroke:0.45px #f2f2f2;">47.125</span>
<span class="t m" style="left:200.20px;top:1592.86px;font-size:25.2px;color:#f2f2f2;-webkit-text-stroke:0.45px #f2f2f2;">2023-10-04 11:18:48.165</span>
<span class="t m" style="left:639.60px;top:1592.86px;font-size:25.2px;color:#f2f2f2;-webkit-text-stroke:0.45px #f2f2f2;">Temperature: nan °C</span>
<span class="t m" style="left:25.00px;top:1627.93px;font-size:25.2px;color:#f2f2f2;-webkit-text-stroke:0.45px #f2f2f2;">47.397</span>
<span class="t m" style="left:200.20px;top:1627.93px;font-size:25.2px;color:#f2f2f2;-webkit-text-stroke:0.45px #f2f2f2;">2023-10-04 11:18:48.437</span>
<span class="t m" style="left:637.60px;top:1627.93px;font-size:25.2px;color:#f2f2f2;-webkit-text-stroke:0.45px #f2f2f2;">Humidity: 0 %</span>
<span class="t m" style="left:25.00px;top:1663.00px;font-size:25.2px;color:#f2f2f2;-webkit-text-stroke:0.45px #f2f2f2;">47.399</span>
<span class="t m" style="left:200.20px;top:1663.00px;font-size:25.2px;color:#f2f2f2;-webkit-text-stroke:0.45px #f2f2f2;">2023-10-04 11:18:48.439</span>
<span class="t m" style="left:637.60px;top:1663.00px;font-size:25.2px;color:#f2f2f2;-webkit-text-stroke:0.45px #f2f2f2;">Publishing to the cloud</span>
<span class="t m" style="left:25.00px;top:1698.07px;font-size:25.2px;color:#f2f2f2;-webkit-text-stroke:0.45px #f2f2f2;">47.648</span>
<span class="t m" style="left:200.20px;top:1698.07px;font-size:25.2px;color:#f2f2f2;-webkit-text-stroke:0.45px #f2f2f2;">2023-10-04 11:18:48.688</span>
<span class="t m" style="left:637.60px;top:1698.07px;font-size:25.2px;color:#f2f2f2;-webkit-text-stroke:0.45px #f2f2f2;">Disconnecting...</span>
<div class="b" style="left:0.00px;top:1752.30px;width:2560.00px;height:51.00px;background:#222;"></div>
<span class="t s" style="left:25.20px;top:1764.59px;font-size:28.6px;color:#f2f2f2;letter-spacing:0.269px;">Press <b>H</b> to toggle the Quick Help.</span>
<span class="t s" style="left:2023.80px;top:1764.59px;font-size:28.6px;color:#f2f2f2;letter-spacing:0.378px;">License:</span>
<div class="b" style="left:2139.80px;top:1764.00px;width:45.00px;height:28.40px;background:#f2af40;border-radius:5px;"></div>
<span class="t s" style="left:2145.00px;top:1771.49px;font-size:16.2px;color:#4a3810;letter-spacing:-0.644px;">PRO</span>
<span class="t s" style="left:2228.00px;top:1764.59px;font-size:28.6px;color:#f2f2f2;letter-spacing:0.221px;">Core: running</span>
<span class="t s" style="left:2439.50px;top:1764.59px;font-size:28.6px;color:#f2f2f2;letter-spacing:-1.213px;">TCP: on</span>
</div></body></html>
